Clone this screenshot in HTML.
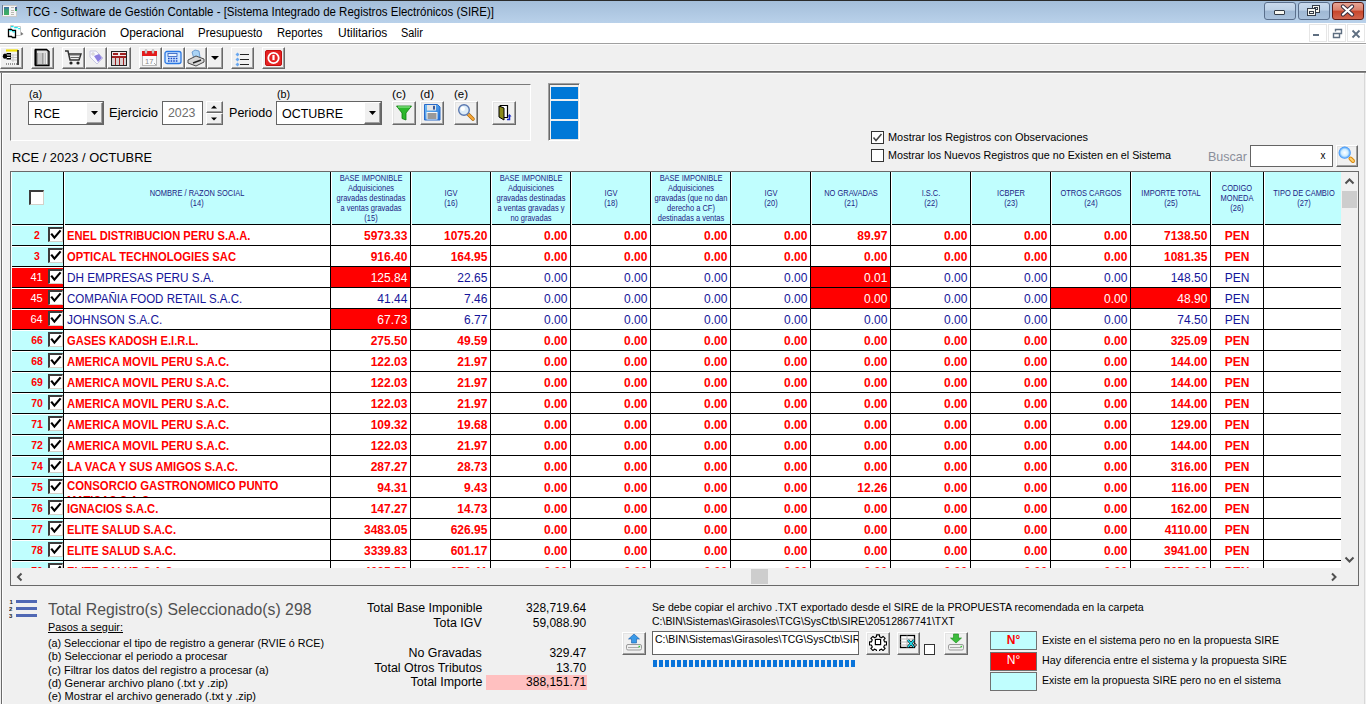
<!DOCTYPE html><html><head><meta charset="utf-8"><style>
html,body{margin:0;padding:0;}
body{width:1366px;height:704px;overflow:hidden;position:relative;background:#f0f0f0;font-family:"Liberation Sans",sans-serif;}
div{box-sizing:border-box;}
</style></head><body>
<div style="position:absolute;left:0px;top:0px;width:1366px;height:23px;background:linear-gradient(#a3bdd9,#b9d1ea);"></div>
<div style="position:absolute;left:0px;top:0px;width:1366px;height:1px;background:#2a2a2a;"></div>
<div style="position:absolute;left:2px;top:5px;width:15px;height:12px;background:#f4f4f4;border:1px solid #c8c8c8;"></div>
<div style="position:absolute;left:4px;top:7px;width:5px;height:8px;background:#4a9a88;"></div>
<div style="position:absolute;left:2px;top:5px;width:1px;height:10px;background:#6a7a90;"></div>
<div style="position:absolute;left:4px;top:7px;width:5px;height:8px;background:linear-gradient(#3a6aa8,#3aa070 40%,#40b060);"></div>
<div style="position:absolute;left:11px;top:7px;width:3px;height:1px;background:#b8b8b0;"></div>
<div style="position:absolute;left:11px;top:9.5px;width:3px;height:1px;background:#b8b8b0;"></div>
<div style="position:absolute;left:11px;top:12px;width:3px;height:1px;background:#b8b8b0;"></div>
<div style="position:absolute;left:11px;top:14px;width:3px;height:1px;background:#b8b8b0;"></div>
<div style="position:absolute;left:15px;top:7px;width:1.5px;height:4px;background:linear-gradient(#4040a0,#30b050);"></div>
<div id="t1" style="position:absolute;left:25.8px;top:5.72px;font:normal 12.5px 'Liberation Sans', sans-serif;line-height:12.5px;color:#000;white-space:pre;transform:scaleX(0.9178);transform-origin:left 50%;">TCG - Software de Gestión Contable - [Sistema Integrado de Registros Electrónicos (SIRE)]</div>
<div style="position:absolute;left:1264px;top:2px;width:32px;height:18px;border:1px solid #5a6f8c;border-radius:3px;background:linear-gradient(#c9daed 0%,#bcd0e6 45%,#9fb8d4 50%,#a9c1dc 100%);"></div>
<div style="position:absolute;left:1298px;top:2px;width:32px;height:18px;border:1px solid #5a6f8c;border-radius:3px;background:linear-gradient(#c9daed 0%,#bcd0e6 45%,#9fb8d4 50%,#a9c1dc 100%);"></div>
<div style="position:absolute;left:1332px;top:2px;width:32px;height:18px;border:1px solid #5d1a14;border-radius:3px;background:linear-gradient(#e8a595 0%,#d9806c 45%,#c7452a 50%,#d2664f 100%);"></div>
<div style="position:absolute;left:1274px;top:10px;width:11px;height:5px;background:#f6f6f0;border:1px solid #343c48;border-radius:1px;"></div>
<div style="position:absolute;left:1312px;top:5px;width:8px;height:8px;background:#f6f6f0;border:1px solid #343c48;"></div>
<div style="position:absolute;left:1314px;top:7px;width:4px;height:3px;border:1px solid #343c48;"></div>
<div style="position:absolute;left:1307px;top:8px;width:9px;height:8px;background:#f6f6f0;border:1px solid #343c48;"></div>
<div style="position:absolute;left:1309px;top:11px;width:5px;height:3px;border:1px solid #343c48;"></div>
<svg style="position:absolute;left:1340px;top:4px" width="15" height="13"><path d="M3 2.5 L12 10.5 M12 2.5 L3 10.5" stroke="#3a3040" stroke-width="4.2" stroke-linecap="round"/><path d="M3 2.5 L12 10.5 M12 2.5 L3 10.5" stroke="#fff" stroke-width="2.2" stroke-linecap="round"/></svg>
<div style="position:absolute;left:0px;top:23px;width:1366px;height:20px;background:#fff;"></div>
<div style="position:absolute;left:0px;top:43px;width:1366px;height:1px;background:#a0a0a0;"></div>
<div style="position:absolute;left:0px;top:44px;width:1366px;height:1px;background:#fcfcfc;"></div>
<svg style="position:absolute;left:4px;top:22px" width="22" height="20"><path d="M6.5 3.5 h3 l1 1 h6 v9 h-6 l-1 -1 h-3 z" fill="#fff" stroke="#c8c8c8" stroke-width="1"/><path d="M7 4.6 h2.6 M10.2 5.6 h3.6 M14.2 6.6 h2" stroke="#18e8f0" stroke-width="1.1"/><path d="M17 10 l2.5 2 l-2.5 1.5 z" fill="#777"/><path d="M4.5 7.5 h3 l1 1 h3 v7 h-3 l-1 -1 h-3 z" fill="#fff" stroke="#000" stroke-width="1.3"/><path d="M5.3 8.7 h2.4 M8.6 9.8 h2.4" stroke="#18e8f0" stroke-width="1.2"/></svg>
<div id="t2" style="position:absolute;left:30.5px;top:26.62px;font:normal 12.5px 'Liberation Sans', sans-serif;line-height:12.5px;color:#000;white-space:pre;transform:scaleX(0.9723);transform-origin:left 50%;">Configuración</div>
<div id="t3" style="position:absolute;left:120px;top:26.62px;font:normal 12.5px 'Liberation Sans', sans-serif;line-height:12.5px;color:#000;white-space:pre;transform:scaleX(0.9495);transform-origin:left 50%;">Operacional</div>
<div id="t4" style="position:absolute;left:198px;top:26.62px;font:normal 12.5px 'Liberation Sans', sans-serif;line-height:12.5px;color:#000;white-space:pre;transform:scaleX(0.9190);transform-origin:left 50%;">Presupuesto</div>
<div id="t5" style="position:absolute;left:277.4px;top:26.62px;font:normal 12.5px 'Liberation Sans', sans-serif;line-height:12.5px;color:#000;white-space:pre;transform:scaleX(0.8988);transform-origin:left 50%;">Reportes</div>
<div id="t6" style="position:absolute;left:337.5px;top:26.62px;font:normal 12.5px 'Liberation Sans', sans-serif;line-height:12.5px;color:#000;white-space:pre;transform:scaleX(0.9590);transform-origin:left 50%;">Utilitarios</div>
<div id="t7" style="position:absolute;left:401.3px;top:26.62px;font:normal 12.5px 'Liberation Sans', sans-serif;line-height:12.5px;color:#000;white-space:pre;transform:scaleX(0.8715);transform-origin:left 50%;">Salir</div>
<div style="position:absolute;left:1309px;top:24px;width:18px;height:18px;background:#fff;border:1px solid #e6e6e6;"></div>
<div style="position:absolute;left:1328px;top:24px;width:18px;height:18px;background:#fff;border:1px solid #e6e6e6;"></div>
<div style="position:absolute;left:1347px;top:24px;width:18px;height:18px;background:#fff;border:1px solid #e6e6e6;"></div>
<div style="position:absolute;left:1313px;top:34px;width:6px;height:2px;background:#5e6e80;"></div>
<svg style="position:absolute;left:1329px;top:25px" width="16" height="16"><path d="M4.5 8.5 h6 v4 h-6 z M6.5 6.5 v-2 h6 v4 h-2" fill="none" stroke="#5e6e80" stroke-width="1.4"/></svg>
<svg style="position:absolute;left:1348px;top:25px" width="16" height="16"><path d="M4.5 5.5 L11.5 12.5 M11.5 5.5 L4.5 12.5" stroke="#5e6e80" stroke-width="1.8"/></svg>
<div style="position:absolute;left:0px;top:47px;width:23px;height:22px;background:#f0f0f0;border-top:1px solid #fff;border-left:1px solid #fff;border-right:1px solid #696969;border-bottom:1px solid #696969;box-shadow:inset -1px -1px 0 #a0a0a0;"></div>
<div style="position:absolute;left:31px;top:47px;width:23px;height:22px;background:#f0f0f0;border-top:1px solid #fff;border-left:1px solid #fff;border-right:1px solid #696969;border-bottom:1px solid #696969;box-shadow:inset -1px -1px 0 #a0a0a0;"></div>
<div style="position:absolute;left:62px;top:47px;width:23px;height:22px;background:#f0f0f0;border-top:1px solid #fff;border-left:1px solid #fff;border-right:1px solid #696969;border-bottom:1px solid #696969;box-shadow:inset -1px -1px 0 #a0a0a0;"></div>
<div style="position:absolute;left:85px;top:47px;width:22px;height:22px;background:#f0f0f0;border-top:1px solid #fff;border-left:1px solid #fff;border-right:1px solid #696969;border-bottom:1px solid #696969;box-shadow:inset -1px -1px 0 #a0a0a0;"></div>
<div style="position:absolute;left:107px;top:47px;width:24px;height:22px;background:#f0f0f0;border-top:1px solid #fff;border-left:1px solid #fff;border-right:1px solid #696969;border-bottom:1px solid #696969;box-shadow:inset -1px -1px 0 #a0a0a0;"></div>
<div style="position:absolute;left:139px;top:47px;width:22.5px;height:22px;background:#f0f0f0;border-top:1px solid #fff;border-left:1px solid #fff;border-right:1px solid #696969;border-bottom:1px solid #696969;box-shadow:inset -1px -1px 0 #a0a0a0;"></div>
<div style="position:absolute;left:161.5px;top:47px;width:23.5px;height:22px;background:#f0f0f0;border-top:1px solid #fff;border-left:1px solid #fff;border-right:1px solid #696969;border-bottom:1px solid #696969;box-shadow:inset -1px -1px 0 #a0a0a0;"></div>
<div style="position:absolute;left:185px;top:47px;width:21.5px;height:22px;background:#f0f0f0;border-top:1px solid #fff;border-left:1px solid #fff;border-right:1px solid #696969;border-bottom:1px solid #696969;box-shadow:inset -1px -1px 0 #a0a0a0;"></div>
<div style="position:absolute;left:206.5px;top:47px;width:16.5px;height:22px;background:#f0f0f0;border-top:1px solid #fff;border-left:1px solid #fff;border-right:1px solid #696969;border-bottom:1px solid #696969;box-shadow:inset -1px -1px 0 #a0a0a0;"></div>
<div style="position:absolute;left:231px;top:47px;width:23px;height:22px;background:#f0f0f0;border-top:1px solid #fff;border-left:1px solid #fff;border-right:1px solid #696969;border-bottom:1px solid #696969;box-shadow:inset -1px -1px 0 #a0a0a0;"></div>
<div style="position:absolute;left:262px;top:47px;width:23px;height:22px;background:#f0f0f0;border-top:1px solid #fff;border-left:1px solid #fff;border-right:1px solid #696969;border-bottom:1px solid #696969;box-shadow:inset -1px -1px 0 #a0a0a0;"></div>
<svg style="position:absolute;left:0px;top:47px" width="23" height="21"><rect x="6" y="3" width="12" height="15" fill="#f4f4f4"/><path d="M6 3.5 h12" stroke="#f0e000" stroke-width="2.2"/><path d="M18 3 v15" stroke="#000" stroke-width="1.4"/><path d="M11 8 h6 M11 10.5 h6 M11 13 h6 M13 7 v8" stroke="#c8c8c8" stroke-width="1"/><path d="M6 17 h12" stroke="#777" stroke-width="1.4" stroke-dasharray="1 1"/><rect x="6.5" y="6" width="4.5" height="6.5" fill="#000"/><ellipse cx="5" cy="9.2" rx="2.2" ry="2.6" fill="#000"/><path d="M7 8 h3.5 M7 10.5 h3.5" stroke="#fff" stroke-width="1"/></svg>
<svg style="position:absolute;left:31px;top:47px" width="23" height="21"><path d="M4.5 2.5 h11 l2.5 2 v14 h-13.5 z" fill="#9a9a9a" stroke="#000" stroke-width="1.3"/><path d="M6 5 h10" stroke="#fff" stroke-width="1.4"/><rect x="7" y="6" width="4" height="11" fill="#c8c8c8"/><rect x="12.5" y="6" width="2" height="11" fill="#d8d8d8"/><path d="M15.5 6 v11" stroke="#f4f4f4" stroke-width="1"/><path d="M4.5 2.5 v16" stroke="#000" stroke-width="2"/></svg>
<svg style="position:absolute;left:64px;top:49px" width="18" height="18"><path d="M1 2 h3 l2 9 h9 l2 -6 h-12" fill="none" stroke="#333" stroke-width="1.5"/><path d="M6 6 h10 M6.5 8.5 h9" stroke="#666" stroke-width="1"/><circle cx="7" cy="14" r="1.6" fill="#222"/><circle cx="14" cy="14" r="1.6" fill="#222"/></svg>
<svg style="position:absolute;left:87px;top:49px" width="18" height="18"><path d="M3 2 L9 2 L16 9 L10 15 L3 8 Z" fill="#f8f8ff" stroke="#c8c8e0" stroke-width="1"/><path d="M7 7 L12 5 L15 9 L11 13 Z" fill="#8c7fe0"/><circle cx="6" cy="5" r="1.2" fill="#fff" stroke="#aaa" stroke-width=".6"/></svg>
<div style="position:absolute;left:111px;top:51px;width:16px;height:15px;background:#f0e8e8;border:1.5px solid #222;"></div>
<div style="position:absolute;left:113px;top:53px;width:5px;height:1.5px;background:#a02020;"></div>
<div style="position:absolute;left:120px;top:53px;width:6px;height:1.5px;background:#a02020;"></div>
<div style="position:absolute;left:112px;top:56px;width:14px;height:1.5px;background:#a02020;"></div>
<div style="position:absolute;left:112px;top:58px;width:14px;height:7px;background:repeating-linear-gradient(90deg,#d8d0d0 0 3px,#a02020 3px 4px);"></div>
<svg style="position:absolute;left:141px;top:49px" width="18" height="18"><rect x="1.5" y="2.5" width="14" height="14" fill="#fbfbfb" stroke="#b8b8b8" stroke-width="1"/><rect x="1" y="2" width="15" height="5" fill="#e41c1c"/><rect x="4" y="0.5" width="2" height="4" rx="1" fill="#d8d8d8" stroke="#999" stroke-width=".5"/><rect x="11" y="0.5" width="2" height="4" rx="1" fill="#d8d8d8" stroke="#999" stroke-width=".5"/><text x="4" y="14.5" font-family="Liberation Sans" font-size="7.5" fill="#8a8a8a">17</text><path d="M13 14 l2 2" stroke="#aaa" stroke-width="1"/></svg>
<svg style="position:absolute;left:164px;top:50px" width="18" height="16"><rect x="1" y="1.5" width="16" height="12" rx="2" fill="#cfe6ff" stroke="#2a78e4" stroke-width="1.3"/><rect x="4" y="3.5" width="9" height="3" fill="#eaf4ff" stroke="#2a5ac0" stroke-width=".8"/><path d="M4 8.5 h10 M4 11 h10" stroke="#1a4ac8" stroke-width="1.3" stroke-dasharray="1.6 1"/></svg>
<svg style="position:absolute;left:187px;top:49px" width="18" height="18"><path d="M5 3 l3 -2 l4 1 l1 6 l-6 2 z" fill="#aad4f6" stroke="#5a8ec8" stroke-width=".8"/><path d="M1 11 l8 -4 l8 3 v3 l-8 4 l-8 -3 z" fill="#d6d6d6" stroke="#4a4a4a" stroke-width="1"/><path d="M6 14 l8 -3" stroke="#222" stroke-width="1.4"/></svg>
<svg style="position:absolute;left:210px;top:54px" width="10" height="8"><path d="M1 2 h8 l-4 4 z" fill="#000"/></svg>
<svg style="position:absolute;left:235px;top:52px" width="5" height="5"><path d="M2.5 0.5 l2 2 l-2 2 l-2 -2 z" fill="#6aa8f0"/></svg>
<div style="position:absolute;left:240px;top:53.5px;width:8.5px;height:1.5px;background:#222;"></div>
<svg style="position:absolute;left:235px;top:57px" width="5" height="5"><path d="M2.5 0.5 l2 2 l-2 2 l-2 -2 z" fill="#6aa8f0"/></svg>
<div style="position:absolute;left:240px;top:58.5px;width:8.5px;height:1.5px;background:#222;"></div>
<svg style="position:absolute;left:235px;top:62px" width="5" height="5"><path d="M2.5 0.5 l2 2 l-2 2 l-2 -2 z" fill="#6aa8f0"/></svg>
<div style="position:absolute;left:240px;top:63.5px;width:8.5px;height:1.5px;background:#222;"></div>
<svg style="position:absolute;left:265px;top:50px" width="17" height="16"><rect x="0.5" y="0.5" width="16" height="15" rx="1.5" fill="#e62222" stroke="#c01010" stroke-width="1"/><circle cx="8.5" cy="8" r="5.2" fill="none" stroke="#fff" stroke-width="1.8"/><rect x="7" y="4.5" width="3" height="6" fill="#fff" stroke="#e62222" stroke-width=".8"/></svg>
<div style="position:absolute;left:0px;top:70px;width:1366px;height:1px;background:#f8f8f8;"></div>
<div style="position:absolute;left:0px;top:71px;width:1366px;height:2px;background:linear-gradient(#6a6a6a 50%,#8a8a8a 50%);"></div>
<div style="position:absolute;left:1px;top:73px;width:1px;height:631px;background:#6a6a6a;"></div>
<div style="position:absolute;left:2px;top:73px;width:1362px;height:1px;background:#fdfdfd;"></div>
<div style="position:absolute;left:2px;top:73px;width:1px;height:631px;background:#fdfdfd;"></div>
<div style="position:absolute;left:1364px;top:73px;width:1px;height:631px;background:#d8d8d8;"></div>
<div style="position:absolute;left:10px;top:84px;width:521px;height:57px;border-top:1px solid #7a7a7a;border-left:1px solid #7a7a7a;border-right:1px solid #fff;border-bottom:1px solid #fff;"></div>
<div style="position:absolute;left:11px;top:85px;width:519px;height:55px;border-top:1px solid #fff;border-left:1px solid #fff;border-right:1px solid #a0a0a0;border-bottom:1px solid #a0a0a0;opacity:0;"></div>
<div id="t8" style="position:absolute;left:28.8px;top:88.69px;font:normal 11px 'Liberation Sans', sans-serif;line-height:11px;color:#000;white-space:pre;transform:scaleX(0.9812);transform-origin:left 50%;">(a)</div>
<div id="t9" style="position:absolute;left:276.5px;top:88.69px;font:normal 11px 'Liberation Sans', sans-serif;line-height:11px;color:#000;white-space:pre;transform:scaleX(0.9738);transform-origin:left 50%;">(b)</div>
<div id="t10" style="position:absolute;left:392px;top:88.69px;font:normal 11px 'Liberation Sans', sans-serif;line-height:11px;color:#000;white-space:pre;transform:scaleX(1.0914);transform-origin:left 50%;">(c)</div>
<div id="t11" style="position:absolute;left:420px;top:88.69px;font:normal 11px 'Liberation Sans', sans-serif;line-height:11px;color:#000;white-space:pre;transform:scaleX(1.0407);transform-origin:left 50%;">(d)</div>
<div id="t12" style="position:absolute;left:454px;top:88.69px;font:normal 11px 'Liberation Sans', sans-serif;line-height:11px;color:#000;white-space:pre;transform:scaleX(1.0407);transform-origin:left 50%;">(e)</div>
<div style="position:absolute;left:28px;top:101px;width:76px;height:24px;background:#fff;border:1px solid #646464;"></div>
<div style="position:absolute;left:86px;top:102px;width:17px;height:22px;background:#f0f0f0;border-top:1px solid #fff;border-left:1px solid #fff;border-right:1px solid #696969;border-bottom:1px solid #696969;box-shadow:inset -1px -1px 0 #a0a0a0;"></div>
<svg style="position:absolute;left:91.0px;top:111px" width="7" height="4"><path d="M0 0 h7 l-3.5 4 z" fill="#000"/></svg>
<div id="t13" style="position:absolute;left:34.2px;top:106.80px;font:normal 13px 'Liberation Sans', sans-serif;line-height:13px;color:#000;white-space:pre;transform:scaleX(0.9471);transform-origin:left 50%;">RCE</div>
<div id="t14" style="position:absolute;left:109.4px;top:106.00px;font:normal 13px 'Liberation Sans', sans-serif;line-height:13px;color:#000;white-space:pre;transform:scaleX(0.9975);transform-origin:left 50%;">Ejercicio</div>
<div style="position:absolute;left:162px;top:101px;width:41px;height:24px;background:#fff;border:1px solid #646464;"></div>
<div id="t15" style="position:absolute;left:168px;top:106.00px;font:normal 13px 'Liberation Sans', sans-serif;line-height:13px;color:#6d6d6d;white-space:pre;transform:scaleX(0.9508);transform-origin:left 50%;">2023</div>
<div style="position:absolute;left:206px;top:101px;width:17px;height:12px;background:#f0f0f0;border-top:1px solid #fff;border-left:1px solid #fff;border-right:1px solid #696969;border-bottom:1px solid #696969;box-shadow:inset -1px -1px 0 #a0a0a0;"></div>
<div style="position:absolute;left:206px;top:113px;width:17px;height:12px;background:#f0f0f0;border-top:1px solid #fff;border-left:1px solid #fff;border-right:1px solid #696969;border-bottom:1px solid #696969;box-shadow:inset -1px -1px 0 #a0a0a0;"></div>
<svg style="position:absolute;left:211px;top:105px" width="6" height="4"><path d="M0 3.5 h6 l-3 -3 z" fill="#000"/></svg>
<svg style="position:absolute;left:211px;top:117px" width="6" height="4"><path d="M0 0.5 h6 l-3 3 z" fill="#000"/></svg>
<div id="t16" style="position:absolute;left:229.1px;top:105.80px;font:normal 13px 'Liberation Sans', sans-serif;line-height:13px;color:#000;white-space:pre;transform:scaleX(0.9662);transform-origin:left 50%;">Periodo</div>
<div style="position:absolute;left:276px;top:101px;width:106px;height:24px;background:#fff;border:1px solid #646464;"></div>
<div style="position:absolute;left:364px;top:102px;width:17px;height:22px;background:#f0f0f0;border-top:1px solid #fff;border-left:1px solid #fff;border-right:1px solid #696969;border-bottom:1px solid #696969;box-shadow:inset -1px -1px 0 #a0a0a0;"></div>
<svg style="position:absolute;left:369.0px;top:111px" width="7" height="4"><path d="M0 0 h7 l-3.5 4 z" fill="#000"/></svg>
<div id="t17" style="position:absolute;left:282.4px;top:107.00px;font:normal 13px 'Liberation Sans', sans-serif;line-height:13px;color:#000;white-space:pre;transform:scaleX(0.9597);transform-origin:left 50%;">OCTUBRE</div>
<div style="position:absolute;left:392px;top:101px;width:24px;height:24px;background:#f0f0f0;border-top:1px solid #fff;border-left:1px solid #fff;border-right:1px solid #696969;border-bottom:1px solid #696969;box-shadow:inset -1px -1px 0 #a0a0a0, inset 1px 1px 0 #e3e3e3;"></div>
<div style="position:absolute;left:420px;top:101px;width:24px;height:24px;background:#f0f0f0;border-top:1px solid #fff;border-left:1px solid #fff;border-right:1px solid #696969;border-bottom:1px solid #696969;box-shadow:inset -1px -1px 0 #a0a0a0, inset 1px 1px 0 #e3e3e3;"></div>
<div style="position:absolute;left:454px;top:101px;width:24px;height:24px;background:#f0f0f0;border-top:1px solid #fff;border-left:1px solid #fff;border-right:1px solid #696969;border-bottom:1px solid #696969;box-shadow:inset -1px -1px 0 #a0a0a0, inset 1px 1px 0 #e3e3e3;"></div>
<div style="position:absolute;left:492px;top:101px;width:24px;height:24px;background:#f0f0f0;border-top:1px solid #fff;border-left:1px solid #fff;border-right:1px solid #696969;border-bottom:1px solid #696969;box-shadow:inset -1px -1px 0 #a0a0a0, inset 1px 1px 0 #e3e3e3;"></div>
<svg style="position:absolute;left:395px;top:104px" width="18" height="18"><path d="M1.5 2 h15 l-5.5 7 v7 l-4 -1.5 v-5.5 z" fill="#2cb82c" stroke="#0e7a0e" stroke-width=".8"/><path d="M3 3 h12" stroke="#8de88d" stroke-width="1.2"/></svg>
<svg style="position:absolute;left:424px;top:104px" width="17" height="17"><defs><linearGradient id="sv" x1="0" y1="0" x2="1" y2="1"><stop offset="0" stop-color="#7ac4f8"/><stop offset="1" stop-color="#1c6cd4"/></linearGradient></defs><path d="M0.5 0.5 h13 l2.5 2.5 v13 h-15.5 z" fill="url(#sv)" stroke="#2a6ac8" stroke-width="1"/><rect x="3" y="1" width="9" height="5.5" fill="#e6e6e6"/><rect x="9" y="1.8" width="2" height="3.8" fill="#3a5a9a"/><rect x="2.5" y="8" width="11" height="7.5" fill="#f8f8f8"/><path d="M3.5 10 h9 M3.5 12 h9 M3.5 14 h9" stroke="#3a3a3a" stroke-width="1"/></svg>
<svg style="position:absolute;left:457px;top:103px" width="19" height="19"><path d="M10.5 10.5 L16 16" stroke="#a86a10" stroke-width="3.6" stroke-linecap="round"/><path d="M10.5 10.5 L16 16" stroke="#f8a838" stroke-width="2.2" stroke-linecap="round"/><circle cx="7" cy="7" r="5.3" fill="#dcecf8" stroke="#5a78b0" stroke-width="1.4"/><circle cx="5.8" cy="5.8" r="2.2" fill="#fff"/></svg>
<svg style="position:absolute;left:495px;top:103px" width="19" height="19"><path d="M5.5 2.5 h7 v12 h-7 z" fill="#fff" stroke="#000" stroke-width="1.2"/><path d="M4 3 l5 2 v12 l-5 -3 z" fill="#8a8a1a" stroke="#000" stroke-width="1"/><path d="M12 16.5 h2.5 v-3.5" fill="none" stroke="#1a2ac8" stroke-width="1.5"/><path d="M12.5 13.5 l2 -2.5 l2 2.5 z" fill="#1a2ac8"/></svg>
<div style="position:absolute;left:548px;top:83px;width:32px;height:58px;background:#f0f0f0;border-top:1px solid #a0a0a0;border-left:1px solid #a0a0a0;border-right:1px solid #fff;border-bottom:1px solid #fff;box-shadow:inset 1px 1px 0 #696969, inset -1px -1px 0 #e3e3e3;"></div>
<div style="position:absolute;left:551px;top:87px;width:27px;height:12px;background:#0078d7;"></div>
<div style="position:absolute;left:551px;top:101px;width:27px;height:18px;background:#0078d7;"></div>
<div style="position:absolute;left:551px;top:121px;width:27px;height:18px;background:#0078d7;"></div>
<div style="position:absolute;left:871px;top:131px;width:13px;height:13px;background:#fff;border:1px solid #333;"></div>
<svg style="position:absolute;left:871px;top:131px" width="13" height="13"><path d="M2.5 6.5 L5 9.5 L10.5 3" fill="none" stroke="#444" stroke-width="1.5"/></svg>
<div style="position:absolute;left:871px;top:149px;width:13px;height:13px;background:#fff;border:1px solid #333;"></div>
<div id="t18" style="position:absolute;left:887.6px;top:132.29px;font:normal 11px 'Liberation Sans', sans-serif;line-height:11px;color:#000;white-space:pre;transform:scaleX(0.9943);transform-origin:left 50%;">Mostrar los Registros con Observaciones</div>
<div id="t19" style="position:absolute;left:887.6px;top:150.09px;font:normal 11px 'Liberation Sans', sans-serif;line-height:11px;color:#000;white-space:pre;transform:scaleX(0.9765);transform-origin:left 50%;">Mostrar los Nuevos Registros que no Existen en el Sistema</div>
<div id="t20" style="position:absolute;left:1208.2px;top:150.00px;font:normal 13px 'Liberation Sans', sans-serif;line-height:13px;color:#8a8e9a;white-space:pre;transform:scaleX(0.9637);transform-origin:left 50%;">Buscar</div>
<div style="position:absolute;left:1250px;top:145px;width:83px;height:22px;background:#fff;border:1px solid #646464;"></div>
<div id="t21" style="position:absolute;left:1320.5px;top:151.03px;font:normal 10px 'Liberation Sans', sans-serif;line-height:10px;color:#000;white-space:pre;">x</div>
<div style="position:absolute;left:1336px;top:145px;width:22px;height:22px;background:#f0f0f0;border-top:1px solid #fff;border-left:1px solid #fff;border-right:1px solid #696969;border-bottom:1px solid #696969;box-shadow:inset -1px -1px 0 #a0a0a0, inset 1px 1px 0 #e3e3e3;"></div>
<svg style="position:absolute;left:1336px;top:144px" width="22" height="22"><defs><radialGradient id="lg" cx="0.5" cy="0.5" r="0.5"><stop offset="0" stop-color="#ffffff"/><stop offset="0.55" stop-color="#cfeeff"/><stop offset="1" stop-color="#2a8af8"/></radialGradient></defs><path d="M14.5 14.5 L17 17" stroke="#d88a10" stroke-width="4" stroke-linecap="round"/><path d="M14.5 14.5 L17 17" stroke="#ffd070" stroke-width="2" stroke-linecap="round"/><circle cx="8.7" cy="8.7" r="6.1" fill="url(#lg)"/></svg>
<div id="t22" style="position:absolute;left:12.3px;top:151.00px;font:normal 13px 'Liberation Sans', sans-serif;line-height:13px;color:#000;white-space:pre;transform:scaleX(0.9886);transform-origin:left 50%;">RCE / 2023 / OCTUBRE</div>
<div style="position:absolute;left:10px;top:171px;width:1349px;height:415px;border:1px solid #696969;background:#f0f0f0;"></div>
<div style="position:absolute;left:11px;top:172px;width:1330px;height:396px;background:#fff;"></div>
<div style="position:absolute;left:12px;top:172px;width:1329px;height:52px;background:#c0fefe;"></div>
<div style="position:absolute;left:29px;top:190px;width:15px;height:15px;background:#fff;border-top:2px solid #3c3c3c;border-left:2px solid #3c3c3c;border-right:1px solid #d4d0c8;border-bottom:1px solid #d4d0c8;"></div>
<div id="t23" style="position:absolute;left:197.0px;top:188.72px;font:normal 8.6px 'Liberation Sans', sans-serif;line-height:8.6px;color:#1c1c84;white-space:pre;transform:translateX(-50%) scaleX(0.8700);transform-origin:center 50%;">NOMBRE / RAZON SOCIAL</div>
<div id="t24" style="position:absolute;left:197.0px;top:198.72px;font:normal 8.6px 'Liberation Sans', sans-serif;line-height:8.6px;color:#1c1c84;white-space:pre;transform:translateX(-50%) scaleX(0.8700);transform-origin:center 50%;">(14)</div>
<div id="t25" style="position:absolute;left:370.5px;top:173.72px;font:normal 8.6px 'Liberation Sans', sans-serif;line-height:8.6px;color:#1c1c84;white-space:pre;transform:translateX(-50%) scaleX(0.8700);transform-origin:center 50%;">BASE IMPONIBLE</div>
<div id="t26" style="position:absolute;left:370.5px;top:183.72px;font:normal 8.6px 'Liberation Sans', sans-serif;line-height:8.6px;color:#1c1c84;white-space:pre;transform:translateX(-50%) scaleX(0.8700);transform-origin:center 50%;">Adquisiciones</div>
<div id="t27" style="position:absolute;left:370.5px;top:193.72px;font:normal 8.6px 'Liberation Sans', sans-serif;line-height:8.6px;color:#1c1c84;white-space:pre;transform:translateX(-50%) scaleX(0.8700);transform-origin:center 50%;">gravadas destinadas</div>
<div id="t28" style="position:absolute;left:370.5px;top:203.72px;font:normal 8.6px 'Liberation Sans', sans-serif;line-height:8.6px;color:#1c1c84;white-space:pre;transform:translateX(-50%) scaleX(0.8700);transform-origin:center 50%;">a ventas gravadas</div>
<div id="t29" style="position:absolute;left:370.5px;top:213.72px;font:normal 8.6px 'Liberation Sans', sans-serif;line-height:8.6px;color:#1c1c84;white-space:pre;transform:translateX(-50%) scaleX(0.8700);transform-origin:center 50%;">(15)</div>
<div id="t30" style="position:absolute;left:450.5px;top:188.72px;font:normal 8.6px 'Liberation Sans', sans-serif;line-height:8.6px;color:#1c1c84;white-space:pre;transform:translateX(-50%) scaleX(0.8700);transform-origin:center 50%;">IGV</div>
<div id="t31" style="position:absolute;left:450.5px;top:198.72px;font:normal 8.6px 'Liberation Sans', sans-serif;line-height:8.6px;color:#1c1c84;white-space:pre;transform:translateX(-50%) scaleX(0.8700);transform-origin:center 50%;">(16)</div>
<div id="t32" style="position:absolute;left:530.5px;top:173.72px;font:normal 8.6px 'Liberation Sans', sans-serif;line-height:8.6px;color:#1c1c84;white-space:pre;transform:translateX(-50%) scaleX(0.8700);transform-origin:center 50%;">BASE IMPONIBLE</div>
<div id="t33" style="position:absolute;left:530.5px;top:183.72px;font:normal 8.6px 'Liberation Sans', sans-serif;line-height:8.6px;color:#1c1c84;white-space:pre;transform:translateX(-50%) scaleX(0.8700);transform-origin:center 50%;">Adquisiciones</div>
<div id="t34" style="position:absolute;left:530.5px;top:193.72px;font:normal 8.6px 'Liberation Sans', sans-serif;line-height:8.6px;color:#1c1c84;white-space:pre;transform:translateX(-50%) scaleX(0.8700);transform-origin:center 50%;">gravadas destinadas</div>
<div id="t35" style="position:absolute;left:530.5px;top:203.72px;font:normal 8.6px 'Liberation Sans', sans-serif;line-height:8.6px;color:#1c1c84;white-space:pre;transform:translateX(-50%) scaleX(0.8700);transform-origin:center 50%;">a ventas gravadas y</div>
<div id="t36" style="position:absolute;left:530.5px;top:213.72px;font:normal 8.6px 'Liberation Sans', sans-serif;line-height:8.6px;color:#1c1c84;white-space:pre;transform:translateX(-50%) scaleX(0.8700);transform-origin:center 50%;">no gravadas</div>
<div id="t37" style="position:absolute;left:610.5px;top:188.72px;font:normal 8.6px 'Liberation Sans', sans-serif;line-height:8.6px;color:#1c1c84;white-space:pre;transform:translateX(-50%) scaleX(0.8700);transform-origin:center 50%;">IGV</div>
<div id="t38" style="position:absolute;left:610.5px;top:198.72px;font:normal 8.6px 'Liberation Sans', sans-serif;line-height:8.6px;color:#1c1c84;white-space:pre;transform:translateX(-50%) scaleX(0.8700);transform-origin:center 50%;">(18)</div>
<div id="t39" style="position:absolute;left:690.5px;top:173.72px;font:normal 8.6px 'Liberation Sans', sans-serif;line-height:8.6px;color:#1c1c84;white-space:pre;transform:translateX(-50%) scaleX(0.8700);transform-origin:center 50%;">BASE IMPONIBLE</div>
<div id="t40" style="position:absolute;left:690.5px;top:183.72px;font:normal 8.6px 'Liberation Sans', sans-serif;line-height:8.6px;color:#1c1c84;white-space:pre;transform:translateX(-50%) scaleX(0.8700);transform-origin:center 50%;">Adquisiciones</div>
<div id="t41" style="position:absolute;left:690.5px;top:193.72px;font:normal 8.6px 'Liberation Sans', sans-serif;line-height:8.6px;color:#1c1c84;white-space:pre;transform:translateX(-50%) scaleX(0.8700);transform-origin:center 50%;">gravadas (que no dan</div>
<div id="t42" style="position:absolute;left:690.5px;top:203.72px;font:normal 8.6px 'Liberation Sans', sans-serif;line-height:8.6px;color:#1c1c84;white-space:pre;transform:translateX(-50%) scaleX(0.8700);transform-origin:center 50%;">derecho a CF)</div>
<div id="t43" style="position:absolute;left:690.5px;top:213.72px;font:normal 8.6px 'Liberation Sans', sans-serif;line-height:8.6px;color:#1c1c84;white-space:pre;transform:translateX(-50%) scaleX(0.8700);transform-origin:center 50%;">destinadas a ventas</div>
<div id="t44" style="position:absolute;left:770.5px;top:188.72px;font:normal 8.6px 'Liberation Sans', sans-serif;line-height:8.6px;color:#1c1c84;white-space:pre;transform:translateX(-50%) scaleX(0.8700);transform-origin:center 50%;">IGV</div>
<div id="t45" style="position:absolute;left:770.5px;top:198.72px;font:normal 8.6px 'Liberation Sans', sans-serif;line-height:8.6px;color:#1c1c84;white-space:pre;transform:translateX(-50%) scaleX(0.8700);transform-origin:center 50%;">(20)</div>
<div id="t46" style="position:absolute;left:850.5px;top:188.72px;font:normal 8.6px 'Liberation Sans', sans-serif;line-height:8.6px;color:#1c1c84;white-space:pre;transform:translateX(-50%) scaleX(0.8700);transform-origin:center 50%;">NO GRAVADAS</div>
<div id="t47" style="position:absolute;left:850.5px;top:198.72px;font:normal 8.6px 'Liberation Sans', sans-serif;line-height:8.6px;color:#1c1c84;white-space:pre;transform:translateX(-50%) scaleX(0.8700);transform-origin:center 50%;">(21)</div>
<div id="t48" style="position:absolute;left:930.5px;top:188.72px;font:normal 8.6px 'Liberation Sans', sans-serif;line-height:8.6px;color:#1c1c84;white-space:pre;transform:translateX(-50%) scaleX(0.8700);transform-origin:center 50%;">I.S.C.</div>
<div id="t49" style="position:absolute;left:930.5px;top:198.72px;font:normal 8.6px 'Liberation Sans', sans-serif;line-height:8.6px;color:#1c1c84;white-space:pre;transform:translateX(-50%) scaleX(0.8700);transform-origin:center 50%;">(22)</div>
<div id="t50" style="position:absolute;left:1010.5px;top:188.72px;font:normal 8.6px 'Liberation Sans', sans-serif;line-height:8.6px;color:#1c1c84;white-space:pre;transform:translateX(-50%) scaleX(0.8700);transform-origin:center 50%;">ICBPER</div>
<div id="t51" style="position:absolute;left:1010.5px;top:198.72px;font:normal 8.6px 'Liberation Sans', sans-serif;line-height:8.6px;color:#1c1c84;white-space:pre;transform:translateX(-50%) scaleX(0.8700);transform-origin:center 50%;">(23)</div>
<div id="t52" style="position:absolute;left:1090.5px;top:188.72px;font:normal 8.6px 'Liberation Sans', sans-serif;line-height:8.6px;color:#1c1c84;white-space:pre;transform:translateX(-50%) scaleX(0.8700);transform-origin:center 50%;">OTROS CARGOS</div>
<div id="t53" style="position:absolute;left:1090.5px;top:198.72px;font:normal 8.6px 'Liberation Sans', sans-serif;line-height:8.6px;color:#1c1c84;white-space:pre;transform:translateX(-50%) scaleX(0.8700);transform-origin:center 50%;">(24)</div>
<div id="t54" style="position:absolute;left:1170.5px;top:188.72px;font:normal 8.6px 'Liberation Sans', sans-serif;line-height:8.6px;color:#1c1c84;white-space:pre;transform:translateX(-50%) scaleX(0.8700);transform-origin:center 50%;">IMPORTE TOTAL</div>
<div id="t55" style="position:absolute;left:1170.5px;top:198.72px;font:normal 8.6px 'Liberation Sans', sans-serif;line-height:8.6px;color:#1c1c84;white-space:pre;transform:translateX(-50%) scaleX(0.8700);transform-origin:center 50%;">(25)</div>
<div id="t56" style="position:absolute;left:1237.0px;top:183.72px;font:normal 8.6px 'Liberation Sans', sans-serif;line-height:8.6px;color:#1c1c84;white-space:pre;transform:translateX(-50%) scaleX(0.8700);transform-origin:center 50%;">CODIGO</div>
<div id="t57" style="position:absolute;left:1237.0px;top:193.72px;font:normal 8.6px 'Liberation Sans', sans-serif;line-height:8.6px;color:#1c1c84;white-space:pre;transform:translateX(-50%) scaleX(0.8700);transform-origin:center 50%;">MONEDA</div>
<div id="t58" style="position:absolute;left:1237.0px;top:203.72px;font:normal 8.6px 'Liberation Sans', sans-serif;line-height:8.6px;color:#1c1c84;white-space:pre;transform:translateX(-50%) scaleX(0.8700);transform-origin:center 50%;">(26)</div>
<div id="t59" style="position:absolute;left:1303.5px;top:188.72px;font:normal 8.6px 'Liberation Sans', sans-serif;line-height:8.6px;color:#1c1c84;white-space:pre;transform:translateX(-50%) scaleX(0.8700);transform-origin:center 50%;">TIPO DE CAMBIO</div>
<div id="t60" style="position:absolute;left:1303.5px;top:198.72px;font:normal 8.6px 'Liberation Sans', sans-serif;line-height:8.6px;color:#1c1c84;white-space:pre;transform:translateX(-50%) scaleX(0.8700);transform-origin:center 50%;">(27)</div>
<div style="position:absolute;left:12px;top:224px;width:1329px;height:344px;overflow:hidden;">
<div style="position:absolute;left:0px;top:1px;width:51px;height:20px;background:#c0fefe;border-top:1px solid #fff;"></div>
<div style="position:absolute;left:36px;top:3px;width:15px;height:15px;background:#fff;border-top:2px solid #3c3c3c;border-left:2px solid #3c3c3c;border-right:1px solid #d4d0c8;border-bottom:1px solid #d4d0c8;"></div>
<svg style="position:absolute;left:36px;top:3px" width="15" height="15"><path d="M3.2 6.6 L6.4 10.6 L12.6 3.4" fill="none" stroke="#000" stroke-width="2.2"/></svg>
<div id="t61" style="position:absolute;left:24.6px;top:5.69px;font:bold 11px 'Liberation Sans', sans-serif;line-height:11px;color:#ff0000;white-space:pre;transform:translateX(-50%) scaleX(0.9500);transform-origin:center 50%;">2</div>
<div style="position:absolute;left:52px;top:1px;width:266px;height:20px;overflow:hidden;">
<div id="t62" style="position:absolute;left:3.200000000000003px;top:4.84px;font:bold 12px 'Liberation Sans', sans-serif;line-height:12px;color:#ff0000;white-space:pre;transform:scaleX(0.9298);transform-origin:left 50%;">ENEL DISTRIBUCION PERU S.A.A.</div>
</div>
<div id="t63" style="position:absolute;left:395.4px;top:5.84px;font:bold 12px 'Liberation Sans', sans-serif;line-height:12px;color:#ff0000;white-space:pre;transform:translateX(-100%);transform-origin:right 50%;">5973.33</div>
<div id="t64" style="position:absolute;left:475.4px;top:5.84px;font:bold 12px 'Liberation Sans', sans-serif;line-height:12px;color:#ff0000;white-space:pre;transform:translateX(-100%);transform-origin:right 50%;">1075.20</div>
<div id="t65" style="position:absolute;left:555.4px;top:5.84px;font:bold 12px 'Liberation Sans', sans-serif;line-height:12px;color:#ff0000;white-space:pre;transform:translateX(-100%);transform-origin:right 50%;">0.00</div>
<div id="t66" style="position:absolute;left:635.4px;top:5.84px;font:bold 12px 'Liberation Sans', sans-serif;line-height:12px;color:#ff0000;white-space:pre;transform:translateX(-100%);transform-origin:right 50%;">0.00</div>
<div id="t67" style="position:absolute;left:715.4px;top:5.84px;font:bold 12px 'Liberation Sans', sans-serif;line-height:12px;color:#ff0000;white-space:pre;transform:translateX(-100%);transform-origin:right 50%;">0.00</div>
<div id="t68" style="position:absolute;left:795.4px;top:5.84px;font:bold 12px 'Liberation Sans', sans-serif;line-height:12px;color:#ff0000;white-space:pre;transform:translateX(-100%);transform-origin:right 50%;">0.00</div>
<div id="t69" style="position:absolute;left:875.4px;top:5.84px;font:bold 12px 'Liberation Sans', sans-serif;line-height:12px;color:#ff0000;white-space:pre;transform:translateX(-100%);transform-origin:right 50%;">89.97</div>
<div id="t70" style="position:absolute;left:955.4px;top:5.84px;font:bold 12px 'Liberation Sans', sans-serif;line-height:12px;color:#ff0000;white-space:pre;transform:translateX(-100%);transform-origin:right 50%;">0.00</div>
<div id="t71" style="position:absolute;left:1035.4px;top:5.84px;font:bold 12px 'Liberation Sans', sans-serif;line-height:12px;color:#ff0000;white-space:pre;transform:translateX(-100%);transform-origin:right 50%;">0.00</div>
<div id="t72" style="position:absolute;left:1115.4px;top:5.84px;font:bold 12px 'Liberation Sans', sans-serif;line-height:12px;color:#ff0000;white-space:pre;transform:translateX(-100%);transform-origin:right 50%;">0.00</div>
<div id="t73" style="position:absolute;left:1195.4px;top:5.84px;font:bold 12px 'Liberation Sans', sans-serif;line-height:12px;color:#ff0000;white-space:pre;transform:translateX(-100%);transform-origin:right 50%;">7138.50</div>
<div id="t74" style="position:absolute;left:1225px;top:5.84px;font:bold 12px 'Liberation Sans', sans-serif;line-height:12px;color:#ff0000;white-space:pre;transform:translateX(-50%);transform-origin:center 50%;">PEN</div>
<div style="position:absolute;left:0px;top:21px;width:1329px;height:1px;background:#000;"></div>
<div style="position:absolute;left:0px;top:22px;width:51px;height:20px;background:#c0fefe;border-top:1px solid #fff;"></div>
<div style="position:absolute;left:36px;top:24px;width:15px;height:15px;background:#fff;border-top:2px solid #3c3c3c;border-left:2px solid #3c3c3c;border-right:1px solid #d4d0c8;border-bottom:1px solid #d4d0c8;"></div>
<svg style="position:absolute;left:36px;top:24px" width="15" height="15"><path d="M3.2 6.6 L6.4 10.6 L12.6 3.4" fill="none" stroke="#000" stroke-width="2.2"/></svg>
<div id="t75" style="position:absolute;left:24.6px;top:26.69px;font:bold 11px 'Liberation Sans', sans-serif;line-height:11px;color:#ff0000;white-space:pre;transform:translateX(-50%) scaleX(0.9500);transform-origin:center 50%;">3</div>
<div style="position:absolute;left:52px;top:22px;width:266px;height:20px;overflow:hidden;">
<div id="t76" style="position:absolute;left:3.200000000000003px;top:4.84px;font:bold 12px 'Liberation Sans', sans-serif;line-height:12px;color:#ff0000;white-space:pre;transform:scaleX(0.9365);transform-origin:left 50%;">OPTICAL TECHNOLOGIES SAC</div>
</div>
<div id="t77" style="position:absolute;left:395.4px;top:26.84px;font:bold 12px 'Liberation Sans', sans-serif;line-height:12px;color:#ff0000;white-space:pre;transform:translateX(-100%);transform-origin:right 50%;">916.40</div>
<div id="t78" style="position:absolute;left:475.4px;top:26.84px;font:bold 12px 'Liberation Sans', sans-serif;line-height:12px;color:#ff0000;white-space:pre;transform:translateX(-100%);transform-origin:right 50%;">164.95</div>
<div id="t79" style="position:absolute;left:555.4px;top:26.84px;font:bold 12px 'Liberation Sans', sans-serif;line-height:12px;color:#ff0000;white-space:pre;transform:translateX(-100%);transform-origin:right 50%;">0.00</div>
<div id="t80" style="position:absolute;left:635.4px;top:26.84px;font:bold 12px 'Liberation Sans', sans-serif;line-height:12px;color:#ff0000;white-space:pre;transform:translateX(-100%);transform-origin:right 50%;">0.00</div>
<div id="t81" style="position:absolute;left:715.4px;top:26.84px;font:bold 12px 'Liberation Sans', sans-serif;line-height:12px;color:#ff0000;white-space:pre;transform:translateX(-100%);transform-origin:right 50%;">0.00</div>
<div id="t82" style="position:absolute;left:795.4px;top:26.84px;font:bold 12px 'Liberation Sans', sans-serif;line-height:12px;color:#ff0000;white-space:pre;transform:translateX(-100%);transform-origin:right 50%;">0.00</div>
<div id="t83" style="position:absolute;left:875.4px;top:26.84px;font:bold 12px 'Liberation Sans', sans-serif;line-height:12px;color:#ff0000;white-space:pre;transform:translateX(-100%);transform-origin:right 50%;">0.00</div>
<div id="t84" style="position:absolute;left:955.4px;top:26.84px;font:bold 12px 'Liberation Sans', sans-serif;line-height:12px;color:#ff0000;white-space:pre;transform:translateX(-100%);transform-origin:right 50%;">0.00</div>
<div id="t85" style="position:absolute;left:1035.4px;top:26.84px;font:bold 12px 'Liberation Sans', sans-serif;line-height:12px;color:#ff0000;white-space:pre;transform:translateX(-100%);transform-origin:right 50%;">0.00</div>
<div id="t86" style="position:absolute;left:1115.4px;top:26.84px;font:bold 12px 'Liberation Sans', sans-serif;line-height:12px;color:#ff0000;white-space:pre;transform:translateX(-100%);transform-origin:right 50%;">0.00</div>
<div id="t87" style="position:absolute;left:1195.4px;top:26.84px;font:bold 12px 'Liberation Sans', sans-serif;line-height:12px;color:#ff0000;white-space:pre;transform:translateX(-100%);transform-origin:right 50%;">1081.35</div>
<div id="t88" style="position:absolute;left:1225px;top:26.84px;font:bold 12px 'Liberation Sans', sans-serif;line-height:12px;color:#ff0000;white-space:pre;transform:translateX(-50%);transform-origin:center 50%;">PEN</div>
<div style="position:absolute;left:0px;top:42px;width:1329px;height:1px;background:#000;"></div>
<div style="position:absolute;left:0px;top:43px;width:51px;height:20px;background:#ff0000;border-top:1px solid #fff;"></div>
<div style="position:absolute;left:36px;top:45px;width:15px;height:15px;background:#fff;border-top:2px solid #3c3c3c;border-left:2px solid #3c3c3c;border-right:1px solid #d4d0c8;border-bottom:1px solid #d4d0c8;"></div>
<svg style="position:absolute;left:36px;top:45px" width="15" height="15"><path d="M3.2 6.6 L6.4 10.6 L12.6 3.4" fill="none" stroke="#000" stroke-width="2.2"/></svg>
<div id="t89" style="position:absolute;left:24.6px;top:47.69px;font:normal 11px 'Liberation Sans', sans-serif;line-height:11px;color:#fff;white-space:pre;transform:translateX(-50%);transform-origin:center 50%;">41</div>
<div style="position:absolute;left:52px;top:43px;width:266px;height:20px;overflow:hidden;">
<div id="t90" style="position:absolute;left:3.200000000000003px;top:4.84px;font:normal 12px 'Liberation Sans', sans-serif;line-height:12px;color:#14149a;white-space:pre;transform:scaleX(0.9804);transform-origin:left 50%;">DH EMPRESAS PERU S.A.</div>
</div>
<div style="position:absolute;left:319px;top:43px;width:79px;height:20px;background:#ff0000;"></div>
<div id="t91" style="position:absolute;left:395.4px;top:47.84px;font:normal 12px 'Liberation Sans', sans-serif;line-height:12px;color:#fff;white-space:pre;transform:translateX(-100%);transform-origin:right 50%;">125.84</div>
<div id="t92" style="position:absolute;left:475.4px;top:47.84px;font:normal 12px 'Liberation Sans', sans-serif;line-height:12px;color:#14149a;white-space:pre;transform:translateX(-100%);transform-origin:right 50%;">22.65</div>
<div id="t93" style="position:absolute;left:555.4px;top:47.84px;font:normal 12px 'Liberation Sans', sans-serif;line-height:12px;color:#14149a;white-space:pre;transform:translateX(-100%);transform-origin:right 50%;">0.00</div>
<div id="t94" style="position:absolute;left:635.4px;top:47.84px;font:normal 12px 'Liberation Sans', sans-serif;line-height:12px;color:#14149a;white-space:pre;transform:translateX(-100%);transform-origin:right 50%;">0.00</div>
<div id="t95" style="position:absolute;left:715.4px;top:47.84px;font:normal 12px 'Liberation Sans', sans-serif;line-height:12px;color:#14149a;white-space:pre;transform:translateX(-100%);transform-origin:right 50%;">0.00</div>
<div id="t96" style="position:absolute;left:795.4px;top:47.84px;font:normal 12px 'Liberation Sans', sans-serif;line-height:12px;color:#14149a;white-space:pre;transform:translateX(-100%);transform-origin:right 50%;">0.00</div>
<div style="position:absolute;left:799px;top:43px;width:79px;height:20px;background:#ff0000;"></div>
<div id="t97" style="position:absolute;left:875.4px;top:47.84px;font:normal 12px 'Liberation Sans', sans-serif;line-height:12px;color:#fff;white-space:pre;transform:translateX(-100%);transform-origin:right 50%;">0.01</div>
<div id="t98" style="position:absolute;left:955.4px;top:47.84px;font:normal 12px 'Liberation Sans', sans-serif;line-height:12px;color:#14149a;white-space:pre;transform:translateX(-100%);transform-origin:right 50%;">0.00</div>
<div id="t99" style="position:absolute;left:1035.4px;top:47.84px;font:normal 12px 'Liberation Sans', sans-serif;line-height:12px;color:#14149a;white-space:pre;transform:translateX(-100%);transform-origin:right 50%;">0.00</div>
<div id="t100" style="position:absolute;left:1115.4px;top:47.84px;font:normal 12px 'Liberation Sans', sans-serif;line-height:12px;color:#14149a;white-space:pre;transform:translateX(-100%);transform-origin:right 50%;">0.00</div>
<div id="t101" style="position:absolute;left:1195.4px;top:47.84px;font:normal 12px 'Liberation Sans', sans-serif;line-height:12px;color:#14149a;white-space:pre;transform:translateX(-100%);transform-origin:right 50%;">148.50</div>
<div id="t102" style="position:absolute;left:1225px;top:47.84px;font:normal 12px 'Liberation Sans', sans-serif;line-height:12px;color:#14149a;white-space:pre;transform:translateX(-50%);transform-origin:center 50%;">PEN</div>
<div style="position:absolute;left:0px;top:63px;width:1329px;height:1px;background:#000;"></div>
<div style="position:absolute;left:0px;top:64px;width:51px;height:20px;background:#ff0000;border-top:1px solid #fff;"></div>
<div style="position:absolute;left:36px;top:66px;width:15px;height:15px;background:#fff;border-top:2px solid #3c3c3c;border-left:2px solid #3c3c3c;border-right:1px solid #d4d0c8;border-bottom:1px solid #d4d0c8;"></div>
<svg style="position:absolute;left:36px;top:66px" width="15" height="15"><path d="M3.2 6.6 L6.4 10.6 L12.6 3.4" fill="none" stroke="#000" stroke-width="2.2"/></svg>
<div id="t103" style="position:absolute;left:24.6px;top:68.69px;font:normal 11px 'Liberation Sans', sans-serif;line-height:11px;color:#fff;white-space:pre;transform:translateX(-50%);transform-origin:center 50%;">45</div>
<div style="position:absolute;left:52px;top:64px;width:266px;height:20px;overflow:hidden;">
<div id="t104" style="position:absolute;left:3.200000000000003px;top:4.84px;font:normal 12px 'Liberation Sans', sans-serif;line-height:12px;color:#14149a;white-space:pre;transform:scaleX(0.9601);transform-origin:left 50%;">COMPAÑIA FOOD RETAIL S.A.C.</div>
</div>
<div id="t105" style="position:absolute;left:395.4px;top:68.84px;font:normal 12px 'Liberation Sans', sans-serif;line-height:12px;color:#14149a;white-space:pre;transform:translateX(-100%);transform-origin:right 50%;">41.44</div>
<div id="t106" style="position:absolute;left:475.4px;top:68.84px;font:normal 12px 'Liberation Sans', sans-serif;line-height:12px;color:#14149a;white-space:pre;transform:translateX(-100%);transform-origin:right 50%;">7.46</div>
<div id="t107" style="position:absolute;left:555.4px;top:68.84px;font:normal 12px 'Liberation Sans', sans-serif;line-height:12px;color:#14149a;white-space:pre;transform:translateX(-100%);transform-origin:right 50%;">0.00</div>
<div id="t108" style="position:absolute;left:635.4px;top:68.84px;font:normal 12px 'Liberation Sans', sans-serif;line-height:12px;color:#14149a;white-space:pre;transform:translateX(-100%);transform-origin:right 50%;">0.00</div>
<div id="t109" style="position:absolute;left:715.4px;top:68.84px;font:normal 12px 'Liberation Sans', sans-serif;line-height:12px;color:#14149a;white-space:pre;transform:translateX(-100%);transform-origin:right 50%;">0.00</div>
<div id="t110" style="position:absolute;left:795.4px;top:68.84px;font:normal 12px 'Liberation Sans', sans-serif;line-height:12px;color:#14149a;white-space:pre;transform:translateX(-100%);transform-origin:right 50%;">0.00</div>
<div style="position:absolute;left:799px;top:64px;width:79px;height:20px;background:#ff0000;"></div>
<div id="t111" style="position:absolute;left:875.4px;top:68.84px;font:normal 12px 'Liberation Sans', sans-serif;line-height:12px;color:#fff;white-space:pre;transform:translateX(-100%);transform-origin:right 50%;">0.00</div>
<div id="t112" style="position:absolute;left:955.4px;top:68.84px;font:normal 12px 'Liberation Sans', sans-serif;line-height:12px;color:#14149a;white-space:pre;transform:translateX(-100%);transform-origin:right 50%;">0.00</div>
<div id="t113" style="position:absolute;left:1035.4px;top:68.84px;font:normal 12px 'Liberation Sans', sans-serif;line-height:12px;color:#14149a;white-space:pre;transform:translateX(-100%);transform-origin:right 50%;">0.00</div>
<div style="position:absolute;left:1039px;top:64px;width:79px;height:20px;background:#ff0000;"></div>
<div id="t114" style="position:absolute;left:1115.4px;top:68.84px;font:normal 12px 'Liberation Sans', sans-serif;line-height:12px;color:#fff;white-space:pre;transform:translateX(-100%);transform-origin:right 50%;">0.00</div>
<div style="position:absolute;left:1119px;top:64px;width:79px;height:20px;background:#ff0000;"></div>
<div id="t115" style="position:absolute;left:1195.4px;top:68.84px;font:normal 12px 'Liberation Sans', sans-serif;line-height:12px;color:#fff;white-space:pre;transform:translateX(-100%);transform-origin:right 50%;">48.90</div>
<div id="t116" style="position:absolute;left:1225px;top:68.84px;font:normal 12px 'Liberation Sans', sans-serif;line-height:12px;color:#14149a;white-space:pre;transform:translateX(-50%);transform-origin:center 50%;">PEN</div>
<div style="position:absolute;left:0px;top:84px;width:1329px;height:1px;background:#000;"></div>
<div style="position:absolute;left:0px;top:85px;width:51px;height:20px;background:#ff0000;border-top:1px solid #fff;"></div>
<div style="position:absolute;left:36px;top:87px;width:15px;height:15px;background:#fff;border-top:2px solid #3c3c3c;border-left:2px solid #3c3c3c;border-right:1px solid #d4d0c8;border-bottom:1px solid #d4d0c8;"></div>
<svg style="position:absolute;left:36px;top:87px" width="15" height="15"><path d="M3.2 6.6 L6.4 10.6 L12.6 3.4" fill="none" stroke="#000" stroke-width="2.2"/></svg>
<div id="t117" style="position:absolute;left:24.6px;top:89.69px;font:normal 11px 'Liberation Sans', sans-serif;line-height:11px;color:#fff;white-space:pre;transform:translateX(-50%);transform-origin:center 50%;">64</div>
<div style="position:absolute;left:52px;top:85px;width:266px;height:20px;overflow:hidden;">
<div id="t118" style="position:absolute;left:3.200000000000003px;top:4.84px;font:normal 12px 'Liberation Sans', sans-serif;line-height:12px;color:#14149a;white-space:pre;transform:scaleX(0.9846);transform-origin:left 50%;">JOHNSON S.A.C.</div>
</div>
<div style="position:absolute;left:319px;top:85px;width:79px;height:20px;background:#ff0000;"></div>
<div id="t119" style="position:absolute;left:395.4px;top:89.84px;font:normal 12px 'Liberation Sans', sans-serif;line-height:12px;color:#fff;white-space:pre;transform:translateX(-100%);transform-origin:right 50%;">67.73</div>
<div id="t120" style="position:absolute;left:475.4px;top:89.84px;font:normal 12px 'Liberation Sans', sans-serif;line-height:12px;color:#14149a;white-space:pre;transform:translateX(-100%);transform-origin:right 50%;">6.77</div>
<div id="t121" style="position:absolute;left:555.4px;top:89.84px;font:normal 12px 'Liberation Sans', sans-serif;line-height:12px;color:#14149a;white-space:pre;transform:translateX(-100%);transform-origin:right 50%;">0.00</div>
<div id="t122" style="position:absolute;left:635.4px;top:89.84px;font:normal 12px 'Liberation Sans', sans-serif;line-height:12px;color:#14149a;white-space:pre;transform:translateX(-100%);transform-origin:right 50%;">0.00</div>
<div id="t123" style="position:absolute;left:715.4px;top:89.84px;font:normal 12px 'Liberation Sans', sans-serif;line-height:12px;color:#14149a;white-space:pre;transform:translateX(-100%);transform-origin:right 50%;">0.00</div>
<div id="t124" style="position:absolute;left:795.4px;top:89.84px;font:normal 12px 'Liberation Sans', sans-serif;line-height:12px;color:#14149a;white-space:pre;transform:translateX(-100%);transform-origin:right 50%;">0.00</div>
<div id="t125" style="position:absolute;left:875.4px;top:89.84px;font:normal 12px 'Liberation Sans', sans-serif;line-height:12px;color:#14149a;white-space:pre;transform:translateX(-100%);transform-origin:right 50%;">0.00</div>
<div id="t126" style="position:absolute;left:955.4px;top:89.84px;font:normal 12px 'Liberation Sans', sans-serif;line-height:12px;color:#14149a;white-space:pre;transform:translateX(-100%);transform-origin:right 50%;">0.00</div>
<div id="t127" style="position:absolute;left:1035.4px;top:89.84px;font:normal 12px 'Liberation Sans', sans-serif;line-height:12px;color:#14149a;white-space:pre;transform:translateX(-100%);transform-origin:right 50%;">0.00</div>
<div id="t128" style="position:absolute;left:1115.4px;top:89.84px;font:normal 12px 'Liberation Sans', sans-serif;line-height:12px;color:#14149a;white-space:pre;transform:translateX(-100%);transform-origin:right 50%;">0.00</div>
<div id="t129" style="position:absolute;left:1195.4px;top:89.84px;font:normal 12px 'Liberation Sans', sans-serif;line-height:12px;color:#14149a;white-space:pre;transform:translateX(-100%);transform-origin:right 50%;">74.50</div>
<div id="t130" style="position:absolute;left:1225px;top:89.84px;font:normal 12px 'Liberation Sans', sans-serif;line-height:12px;color:#14149a;white-space:pre;transform:translateX(-50%);transform-origin:center 50%;">PEN</div>
<div style="position:absolute;left:0px;top:105px;width:1329px;height:1px;background:#000;"></div>
<div style="position:absolute;left:0px;top:106px;width:51px;height:20px;background:#c0fefe;border-top:1px solid #fff;"></div>
<div style="position:absolute;left:36px;top:108px;width:15px;height:15px;background:#fff;border-top:2px solid #3c3c3c;border-left:2px solid #3c3c3c;border-right:1px solid #d4d0c8;border-bottom:1px solid #d4d0c8;"></div>
<svg style="position:absolute;left:36px;top:108px" width="15" height="15"><path d="M3.2 6.6 L6.4 10.6 L12.6 3.4" fill="none" stroke="#000" stroke-width="2.2"/></svg>
<div id="t131" style="position:absolute;left:24.6px;top:110.69px;font:bold 11px 'Liberation Sans', sans-serif;line-height:11px;color:#ff0000;white-space:pre;transform:translateX(-50%) scaleX(0.9500);transform-origin:center 50%;">66</div>
<div style="position:absolute;left:52px;top:106px;width:266px;height:20px;overflow:hidden;">
<div id="t132" style="position:absolute;left:3.200000000000003px;top:4.84px;font:bold 12px 'Liberation Sans', sans-serif;line-height:12px;color:#ff0000;white-space:pre;transform:scaleX(0.9288);transform-origin:left 50%;">GASES KADOSH E.I.R.L.</div>
</div>
<div id="t133" style="position:absolute;left:395.4px;top:110.84px;font:bold 12px 'Liberation Sans', sans-serif;line-height:12px;color:#ff0000;white-space:pre;transform:translateX(-100%);transform-origin:right 50%;">275.50</div>
<div id="t134" style="position:absolute;left:475.4px;top:110.84px;font:bold 12px 'Liberation Sans', sans-serif;line-height:12px;color:#ff0000;white-space:pre;transform:translateX(-100%);transform-origin:right 50%;">49.59</div>
<div id="t135" style="position:absolute;left:555.4px;top:110.84px;font:bold 12px 'Liberation Sans', sans-serif;line-height:12px;color:#ff0000;white-space:pre;transform:translateX(-100%);transform-origin:right 50%;">0.00</div>
<div id="t136" style="position:absolute;left:635.4px;top:110.84px;font:bold 12px 'Liberation Sans', sans-serif;line-height:12px;color:#ff0000;white-space:pre;transform:translateX(-100%);transform-origin:right 50%;">0.00</div>
<div id="t137" style="position:absolute;left:715.4px;top:110.84px;font:bold 12px 'Liberation Sans', sans-serif;line-height:12px;color:#ff0000;white-space:pre;transform:translateX(-100%);transform-origin:right 50%;">0.00</div>
<div id="t138" style="position:absolute;left:795.4px;top:110.84px;font:bold 12px 'Liberation Sans', sans-serif;line-height:12px;color:#ff0000;white-space:pre;transform:translateX(-100%);transform-origin:right 50%;">0.00</div>
<div id="t139" style="position:absolute;left:875.4px;top:110.84px;font:bold 12px 'Liberation Sans', sans-serif;line-height:12px;color:#ff0000;white-space:pre;transform:translateX(-100%);transform-origin:right 50%;">0.00</div>
<div id="t140" style="position:absolute;left:955.4px;top:110.84px;font:bold 12px 'Liberation Sans', sans-serif;line-height:12px;color:#ff0000;white-space:pre;transform:translateX(-100%);transform-origin:right 50%;">0.00</div>
<div id="t141" style="position:absolute;left:1035.4px;top:110.84px;font:bold 12px 'Liberation Sans', sans-serif;line-height:12px;color:#ff0000;white-space:pre;transform:translateX(-100%);transform-origin:right 50%;">0.00</div>
<div id="t142" style="position:absolute;left:1115.4px;top:110.84px;font:bold 12px 'Liberation Sans', sans-serif;line-height:12px;color:#ff0000;white-space:pre;transform:translateX(-100%);transform-origin:right 50%;">0.00</div>
<div id="t143" style="position:absolute;left:1195.4px;top:110.84px;font:bold 12px 'Liberation Sans', sans-serif;line-height:12px;color:#ff0000;white-space:pre;transform:translateX(-100%);transform-origin:right 50%;">325.09</div>
<div id="t144" style="position:absolute;left:1225px;top:110.84px;font:bold 12px 'Liberation Sans', sans-serif;line-height:12px;color:#ff0000;white-space:pre;transform:translateX(-50%);transform-origin:center 50%;">PEN</div>
<div style="position:absolute;left:0px;top:126px;width:1329px;height:1px;background:#000;"></div>
<div style="position:absolute;left:0px;top:127px;width:51px;height:20px;background:#c0fefe;border-top:1px solid #fff;"></div>
<div style="position:absolute;left:36px;top:129px;width:15px;height:15px;background:#fff;border-top:2px solid #3c3c3c;border-left:2px solid #3c3c3c;border-right:1px solid #d4d0c8;border-bottom:1px solid #d4d0c8;"></div>
<svg style="position:absolute;left:36px;top:129px" width="15" height="15"><path d="M3.2 6.6 L6.4 10.6 L12.6 3.4" fill="none" stroke="#000" stroke-width="2.2"/></svg>
<div id="t145" style="position:absolute;left:24.6px;top:131.69px;font:bold 11px 'Liberation Sans', sans-serif;line-height:11px;color:#ff0000;white-space:pre;transform:translateX(-50%) scaleX(0.9500);transform-origin:center 50%;">68</div>
<div style="position:absolute;left:52px;top:127px;width:266px;height:20px;overflow:hidden;">
<div id="t146" style="position:absolute;left:3.200000000000003px;top:4.84px;font:bold 12px 'Liberation Sans', sans-serif;line-height:12px;color:#ff0000;white-space:pre;transform:scaleX(0.9429);transform-origin:left 50%;">AMERICA MOVIL PERU S.A.C.</div>
</div>
<div id="t147" style="position:absolute;left:395.4px;top:131.84px;font:bold 12px 'Liberation Sans', sans-serif;line-height:12px;color:#ff0000;white-space:pre;transform:translateX(-100%);transform-origin:right 50%;">122.03</div>
<div id="t148" style="position:absolute;left:475.4px;top:131.84px;font:bold 12px 'Liberation Sans', sans-serif;line-height:12px;color:#ff0000;white-space:pre;transform:translateX(-100%);transform-origin:right 50%;">21.97</div>
<div id="t149" style="position:absolute;left:555.4px;top:131.84px;font:bold 12px 'Liberation Sans', sans-serif;line-height:12px;color:#ff0000;white-space:pre;transform:translateX(-100%);transform-origin:right 50%;">0.00</div>
<div id="t150" style="position:absolute;left:635.4px;top:131.84px;font:bold 12px 'Liberation Sans', sans-serif;line-height:12px;color:#ff0000;white-space:pre;transform:translateX(-100%);transform-origin:right 50%;">0.00</div>
<div id="t151" style="position:absolute;left:715.4px;top:131.84px;font:bold 12px 'Liberation Sans', sans-serif;line-height:12px;color:#ff0000;white-space:pre;transform:translateX(-100%);transform-origin:right 50%;">0.00</div>
<div id="t152" style="position:absolute;left:795.4px;top:131.84px;font:bold 12px 'Liberation Sans', sans-serif;line-height:12px;color:#ff0000;white-space:pre;transform:translateX(-100%);transform-origin:right 50%;">0.00</div>
<div id="t153" style="position:absolute;left:875.4px;top:131.84px;font:bold 12px 'Liberation Sans', sans-serif;line-height:12px;color:#ff0000;white-space:pre;transform:translateX(-100%);transform-origin:right 50%;">0.00</div>
<div id="t154" style="position:absolute;left:955.4px;top:131.84px;font:bold 12px 'Liberation Sans', sans-serif;line-height:12px;color:#ff0000;white-space:pre;transform:translateX(-100%);transform-origin:right 50%;">0.00</div>
<div id="t155" style="position:absolute;left:1035.4px;top:131.84px;font:bold 12px 'Liberation Sans', sans-serif;line-height:12px;color:#ff0000;white-space:pre;transform:translateX(-100%);transform-origin:right 50%;">0.00</div>
<div id="t156" style="position:absolute;left:1115.4px;top:131.84px;font:bold 12px 'Liberation Sans', sans-serif;line-height:12px;color:#ff0000;white-space:pre;transform:translateX(-100%);transform-origin:right 50%;">0.00</div>
<div id="t157" style="position:absolute;left:1195.4px;top:131.84px;font:bold 12px 'Liberation Sans', sans-serif;line-height:12px;color:#ff0000;white-space:pre;transform:translateX(-100%);transform-origin:right 50%;">144.00</div>
<div id="t158" style="position:absolute;left:1225px;top:131.84px;font:bold 12px 'Liberation Sans', sans-serif;line-height:12px;color:#ff0000;white-space:pre;transform:translateX(-50%);transform-origin:center 50%;">PEN</div>
<div style="position:absolute;left:0px;top:147px;width:1329px;height:1px;background:#000;"></div>
<div style="position:absolute;left:0px;top:148px;width:51px;height:20px;background:#c0fefe;border-top:1px solid #fff;"></div>
<div style="position:absolute;left:36px;top:150px;width:15px;height:15px;background:#fff;border-top:2px solid #3c3c3c;border-left:2px solid #3c3c3c;border-right:1px solid #d4d0c8;border-bottom:1px solid #d4d0c8;"></div>
<svg style="position:absolute;left:36px;top:150px" width="15" height="15"><path d="M3.2 6.6 L6.4 10.6 L12.6 3.4" fill="none" stroke="#000" stroke-width="2.2"/></svg>
<div id="t159" style="position:absolute;left:24.6px;top:152.69px;font:bold 11px 'Liberation Sans', sans-serif;line-height:11px;color:#ff0000;white-space:pre;transform:translateX(-50%) scaleX(0.9500);transform-origin:center 50%;">69</div>
<div style="position:absolute;left:52px;top:148px;width:266px;height:20px;overflow:hidden;">
<div id="t160" style="position:absolute;left:3.200000000000003px;top:4.84px;font:bold 12px 'Liberation Sans', sans-serif;line-height:12px;color:#ff0000;white-space:pre;transform:scaleX(0.9429);transform-origin:left 50%;">AMERICA MOVIL PERU S.A.C.</div>
</div>
<div id="t161" style="position:absolute;left:395.4px;top:152.84px;font:bold 12px 'Liberation Sans', sans-serif;line-height:12px;color:#ff0000;white-space:pre;transform:translateX(-100%);transform-origin:right 50%;">122.03</div>
<div id="t162" style="position:absolute;left:475.4px;top:152.84px;font:bold 12px 'Liberation Sans', sans-serif;line-height:12px;color:#ff0000;white-space:pre;transform:translateX(-100%);transform-origin:right 50%;">21.97</div>
<div id="t163" style="position:absolute;left:555.4px;top:152.84px;font:bold 12px 'Liberation Sans', sans-serif;line-height:12px;color:#ff0000;white-space:pre;transform:translateX(-100%);transform-origin:right 50%;">0.00</div>
<div id="t164" style="position:absolute;left:635.4px;top:152.84px;font:bold 12px 'Liberation Sans', sans-serif;line-height:12px;color:#ff0000;white-space:pre;transform:translateX(-100%);transform-origin:right 50%;">0.00</div>
<div id="t165" style="position:absolute;left:715.4px;top:152.84px;font:bold 12px 'Liberation Sans', sans-serif;line-height:12px;color:#ff0000;white-space:pre;transform:translateX(-100%);transform-origin:right 50%;">0.00</div>
<div id="t166" style="position:absolute;left:795.4px;top:152.84px;font:bold 12px 'Liberation Sans', sans-serif;line-height:12px;color:#ff0000;white-space:pre;transform:translateX(-100%);transform-origin:right 50%;">0.00</div>
<div id="t167" style="position:absolute;left:875.4px;top:152.84px;font:bold 12px 'Liberation Sans', sans-serif;line-height:12px;color:#ff0000;white-space:pre;transform:translateX(-100%);transform-origin:right 50%;">0.00</div>
<div id="t168" style="position:absolute;left:955.4px;top:152.84px;font:bold 12px 'Liberation Sans', sans-serif;line-height:12px;color:#ff0000;white-space:pre;transform:translateX(-100%);transform-origin:right 50%;">0.00</div>
<div id="t169" style="position:absolute;left:1035.4px;top:152.84px;font:bold 12px 'Liberation Sans', sans-serif;line-height:12px;color:#ff0000;white-space:pre;transform:translateX(-100%);transform-origin:right 50%;">0.00</div>
<div id="t170" style="position:absolute;left:1115.4px;top:152.84px;font:bold 12px 'Liberation Sans', sans-serif;line-height:12px;color:#ff0000;white-space:pre;transform:translateX(-100%);transform-origin:right 50%;">0.00</div>
<div id="t171" style="position:absolute;left:1195.4px;top:152.84px;font:bold 12px 'Liberation Sans', sans-serif;line-height:12px;color:#ff0000;white-space:pre;transform:translateX(-100%);transform-origin:right 50%;">144.00</div>
<div id="t172" style="position:absolute;left:1225px;top:152.84px;font:bold 12px 'Liberation Sans', sans-serif;line-height:12px;color:#ff0000;white-space:pre;transform:translateX(-50%);transform-origin:center 50%;">PEN</div>
<div style="position:absolute;left:0px;top:168px;width:1329px;height:1px;background:#000;"></div>
<div style="position:absolute;left:0px;top:169px;width:51px;height:20px;background:#c0fefe;border-top:1px solid #fff;"></div>
<div style="position:absolute;left:36px;top:171px;width:15px;height:15px;background:#fff;border-top:2px solid #3c3c3c;border-left:2px solid #3c3c3c;border-right:1px solid #d4d0c8;border-bottom:1px solid #d4d0c8;"></div>
<svg style="position:absolute;left:36px;top:171px" width="15" height="15"><path d="M3.2 6.6 L6.4 10.6 L12.6 3.4" fill="none" stroke="#000" stroke-width="2.2"/></svg>
<div id="t173" style="position:absolute;left:24.6px;top:173.69px;font:bold 11px 'Liberation Sans', sans-serif;line-height:11px;color:#ff0000;white-space:pre;transform:translateX(-50%) scaleX(0.9500);transform-origin:center 50%;">70</div>
<div style="position:absolute;left:52px;top:169px;width:266px;height:20px;overflow:hidden;">
<div id="t174" style="position:absolute;left:3.200000000000003px;top:4.84px;font:bold 12px 'Liberation Sans', sans-serif;line-height:12px;color:#ff0000;white-space:pre;transform:scaleX(0.9429);transform-origin:left 50%;">AMERICA MOVIL PERU S.A.C.</div>
</div>
<div id="t175" style="position:absolute;left:395.4px;top:173.84px;font:bold 12px 'Liberation Sans', sans-serif;line-height:12px;color:#ff0000;white-space:pre;transform:translateX(-100%);transform-origin:right 50%;">122.03</div>
<div id="t176" style="position:absolute;left:475.4px;top:173.84px;font:bold 12px 'Liberation Sans', sans-serif;line-height:12px;color:#ff0000;white-space:pre;transform:translateX(-100%);transform-origin:right 50%;">21.97</div>
<div id="t177" style="position:absolute;left:555.4px;top:173.84px;font:bold 12px 'Liberation Sans', sans-serif;line-height:12px;color:#ff0000;white-space:pre;transform:translateX(-100%);transform-origin:right 50%;">0.00</div>
<div id="t178" style="position:absolute;left:635.4px;top:173.84px;font:bold 12px 'Liberation Sans', sans-serif;line-height:12px;color:#ff0000;white-space:pre;transform:translateX(-100%);transform-origin:right 50%;">0.00</div>
<div id="t179" style="position:absolute;left:715.4px;top:173.84px;font:bold 12px 'Liberation Sans', sans-serif;line-height:12px;color:#ff0000;white-space:pre;transform:translateX(-100%);transform-origin:right 50%;">0.00</div>
<div id="t180" style="position:absolute;left:795.4px;top:173.84px;font:bold 12px 'Liberation Sans', sans-serif;line-height:12px;color:#ff0000;white-space:pre;transform:translateX(-100%);transform-origin:right 50%;">0.00</div>
<div id="t181" style="position:absolute;left:875.4px;top:173.84px;font:bold 12px 'Liberation Sans', sans-serif;line-height:12px;color:#ff0000;white-space:pre;transform:translateX(-100%);transform-origin:right 50%;">0.00</div>
<div id="t182" style="position:absolute;left:955.4px;top:173.84px;font:bold 12px 'Liberation Sans', sans-serif;line-height:12px;color:#ff0000;white-space:pre;transform:translateX(-100%);transform-origin:right 50%;">0.00</div>
<div id="t183" style="position:absolute;left:1035.4px;top:173.84px;font:bold 12px 'Liberation Sans', sans-serif;line-height:12px;color:#ff0000;white-space:pre;transform:translateX(-100%);transform-origin:right 50%;">0.00</div>
<div id="t184" style="position:absolute;left:1115.4px;top:173.84px;font:bold 12px 'Liberation Sans', sans-serif;line-height:12px;color:#ff0000;white-space:pre;transform:translateX(-100%);transform-origin:right 50%;">0.00</div>
<div id="t185" style="position:absolute;left:1195.4px;top:173.84px;font:bold 12px 'Liberation Sans', sans-serif;line-height:12px;color:#ff0000;white-space:pre;transform:translateX(-100%);transform-origin:right 50%;">144.00</div>
<div id="t186" style="position:absolute;left:1225px;top:173.84px;font:bold 12px 'Liberation Sans', sans-serif;line-height:12px;color:#ff0000;white-space:pre;transform:translateX(-50%);transform-origin:center 50%;">PEN</div>
<div style="position:absolute;left:0px;top:189px;width:1329px;height:1px;background:#000;"></div>
<div style="position:absolute;left:0px;top:190px;width:51px;height:20px;background:#c0fefe;border-top:1px solid #fff;"></div>
<div style="position:absolute;left:36px;top:192px;width:15px;height:15px;background:#fff;border-top:2px solid #3c3c3c;border-left:2px solid #3c3c3c;border-right:1px solid #d4d0c8;border-bottom:1px solid #d4d0c8;"></div>
<svg style="position:absolute;left:36px;top:192px" width="15" height="15"><path d="M3.2 6.6 L6.4 10.6 L12.6 3.4" fill="none" stroke="#000" stroke-width="2.2"/></svg>
<div id="t187" style="position:absolute;left:24.6px;top:194.69px;font:bold 11px 'Liberation Sans', sans-serif;line-height:11px;color:#ff0000;white-space:pre;transform:translateX(-50%) scaleX(0.9500);transform-origin:center 50%;">71</div>
<div style="position:absolute;left:52px;top:190px;width:266px;height:20px;overflow:hidden;">
<div id="t188" style="position:absolute;left:3.200000000000003px;top:4.84px;font:bold 12px 'Liberation Sans', sans-serif;line-height:12px;color:#ff0000;white-space:pre;transform:scaleX(0.9429);transform-origin:left 50%;">AMERICA MOVIL PERU S.A.C.</div>
</div>
<div id="t189" style="position:absolute;left:395.4px;top:194.84px;font:bold 12px 'Liberation Sans', sans-serif;line-height:12px;color:#ff0000;white-space:pre;transform:translateX(-100%);transform-origin:right 50%;">109.32</div>
<div id="t190" style="position:absolute;left:475.4px;top:194.84px;font:bold 12px 'Liberation Sans', sans-serif;line-height:12px;color:#ff0000;white-space:pre;transform:translateX(-100%);transform-origin:right 50%;">19.68</div>
<div id="t191" style="position:absolute;left:555.4px;top:194.84px;font:bold 12px 'Liberation Sans', sans-serif;line-height:12px;color:#ff0000;white-space:pre;transform:translateX(-100%);transform-origin:right 50%;">0.00</div>
<div id="t192" style="position:absolute;left:635.4px;top:194.84px;font:bold 12px 'Liberation Sans', sans-serif;line-height:12px;color:#ff0000;white-space:pre;transform:translateX(-100%);transform-origin:right 50%;">0.00</div>
<div id="t193" style="position:absolute;left:715.4px;top:194.84px;font:bold 12px 'Liberation Sans', sans-serif;line-height:12px;color:#ff0000;white-space:pre;transform:translateX(-100%);transform-origin:right 50%;">0.00</div>
<div id="t194" style="position:absolute;left:795.4px;top:194.84px;font:bold 12px 'Liberation Sans', sans-serif;line-height:12px;color:#ff0000;white-space:pre;transform:translateX(-100%);transform-origin:right 50%;">0.00</div>
<div id="t195" style="position:absolute;left:875.4px;top:194.84px;font:bold 12px 'Liberation Sans', sans-serif;line-height:12px;color:#ff0000;white-space:pre;transform:translateX(-100%);transform-origin:right 50%;">0.00</div>
<div id="t196" style="position:absolute;left:955.4px;top:194.84px;font:bold 12px 'Liberation Sans', sans-serif;line-height:12px;color:#ff0000;white-space:pre;transform:translateX(-100%);transform-origin:right 50%;">0.00</div>
<div id="t197" style="position:absolute;left:1035.4px;top:194.84px;font:bold 12px 'Liberation Sans', sans-serif;line-height:12px;color:#ff0000;white-space:pre;transform:translateX(-100%);transform-origin:right 50%;">0.00</div>
<div id="t198" style="position:absolute;left:1115.4px;top:194.84px;font:bold 12px 'Liberation Sans', sans-serif;line-height:12px;color:#ff0000;white-space:pre;transform:translateX(-100%);transform-origin:right 50%;">0.00</div>
<div id="t199" style="position:absolute;left:1195.4px;top:194.84px;font:bold 12px 'Liberation Sans', sans-serif;line-height:12px;color:#ff0000;white-space:pre;transform:translateX(-100%);transform-origin:right 50%;">129.00</div>
<div id="t200" style="position:absolute;left:1225px;top:194.84px;font:bold 12px 'Liberation Sans', sans-serif;line-height:12px;color:#ff0000;white-space:pre;transform:translateX(-50%);transform-origin:center 50%;">PEN</div>
<div style="position:absolute;left:0px;top:210px;width:1329px;height:1px;background:#000;"></div>
<div style="position:absolute;left:0px;top:211px;width:51px;height:20px;background:#c0fefe;border-top:1px solid #fff;"></div>
<div style="position:absolute;left:36px;top:213px;width:15px;height:15px;background:#fff;border-top:2px solid #3c3c3c;border-left:2px solid #3c3c3c;border-right:1px solid #d4d0c8;border-bottom:1px solid #d4d0c8;"></div>
<svg style="position:absolute;left:36px;top:213px" width="15" height="15"><path d="M3.2 6.6 L6.4 10.6 L12.6 3.4" fill="none" stroke="#000" stroke-width="2.2"/></svg>
<div id="t201" style="position:absolute;left:24.6px;top:215.69px;font:bold 11px 'Liberation Sans', sans-serif;line-height:11px;color:#ff0000;white-space:pre;transform:translateX(-50%) scaleX(0.9500);transform-origin:center 50%;">72</div>
<div style="position:absolute;left:52px;top:211px;width:266px;height:20px;overflow:hidden;">
<div id="t202" style="position:absolute;left:3.200000000000003px;top:4.84px;font:bold 12px 'Liberation Sans', sans-serif;line-height:12px;color:#ff0000;white-space:pre;transform:scaleX(0.9429);transform-origin:left 50%;">AMERICA MOVIL PERU S.A.C.</div>
</div>
<div id="t203" style="position:absolute;left:395.4px;top:215.84px;font:bold 12px 'Liberation Sans', sans-serif;line-height:12px;color:#ff0000;white-space:pre;transform:translateX(-100%);transform-origin:right 50%;">122.03</div>
<div id="t204" style="position:absolute;left:475.4px;top:215.84px;font:bold 12px 'Liberation Sans', sans-serif;line-height:12px;color:#ff0000;white-space:pre;transform:translateX(-100%);transform-origin:right 50%;">21.97</div>
<div id="t205" style="position:absolute;left:555.4px;top:215.84px;font:bold 12px 'Liberation Sans', sans-serif;line-height:12px;color:#ff0000;white-space:pre;transform:translateX(-100%);transform-origin:right 50%;">0.00</div>
<div id="t206" style="position:absolute;left:635.4px;top:215.84px;font:bold 12px 'Liberation Sans', sans-serif;line-height:12px;color:#ff0000;white-space:pre;transform:translateX(-100%);transform-origin:right 50%;">0.00</div>
<div id="t207" style="position:absolute;left:715.4px;top:215.84px;font:bold 12px 'Liberation Sans', sans-serif;line-height:12px;color:#ff0000;white-space:pre;transform:translateX(-100%);transform-origin:right 50%;">0.00</div>
<div id="t208" style="position:absolute;left:795.4px;top:215.84px;font:bold 12px 'Liberation Sans', sans-serif;line-height:12px;color:#ff0000;white-space:pre;transform:translateX(-100%);transform-origin:right 50%;">0.00</div>
<div id="t209" style="position:absolute;left:875.4px;top:215.84px;font:bold 12px 'Liberation Sans', sans-serif;line-height:12px;color:#ff0000;white-space:pre;transform:translateX(-100%);transform-origin:right 50%;">0.00</div>
<div id="t210" style="position:absolute;left:955.4px;top:215.84px;font:bold 12px 'Liberation Sans', sans-serif;line-height:12px;color:#ff0000;white-space:pre;transform:translateX(-100%);transform-origin:right 50%;">0.00</div>
<div id="t211" style="position:absolute;left:1035.4px;top:215.84px;font:bold 12px 'Liberation Sans', sans-serif;line-height:12px;color:#ff0000;white-space:pre;transform:translateX(-100%);transform-origin:right 50%;">0.00</div>
<div id="t212" style="position:absolute;left:1115.4px;top:215.84px;font:bold 12px 'Liberation Sans', sans-serif;line-height:12px;color:#ff0000;white-space:pre;transform:translateX(-100%);transform-origin:right 50%;">0.00</div>
<div id="t213" style="position:absolute;left:1195.4px;top:215.84px;font:bold 12px 'Liberation Sans', sans-serif;line-height:12px;color:#ff0000;white-space:pre;transform:translateX(-100%);transform-origin:right 50%;">144.00</div>
<div id="t214" style="position:absolute;left:1225px;top:215.84px;font:bold 12px 'Liberation Sans', sans-serif;line-height:12px;color:#ff0000;white-space:pre;transform:translateX(-50%);transform-origin:center 50%;">PEN</div>
<div style="position:absolute;left:0px;top:231px;width:1329px;height:1px;background:#000;"></div>
<div style="position:absolute;left:0px;top:232px;width:51px;height:20px;background:#c0fefe;border-top:1px solid #fff;"></div>
<div style="position:absolute;left:36px;top:234px;width:15px;height:15px;background:#fff;border-top:2px solid #3c3c3c;border-left:2px solid #3c3c3c;border-right:1px solid #d4d0c8;border-bottom:1px solid #d4d0c8;"></div>
<svg style="position:absolute;left:36px;top:234px" width="15" height="15"><path d="M3.2 6.6 L6.4 10.6 L12.6 3.4" fill="none" stroke="#000" stroke-width="2.2"/></svg>
<div id="t215" style="position:absolute;left:24.6px;top:236.69px;font:bold 11px 'Liberation Sans', sans-serif;line-height:11px;color:#ff0000;white-space:pre;transform:translateX(-50%) scaleX(0.9500);transform-origin:center 50%;">74</div>
<div style="position:absolute;left:52px;top:232px;width:266px;height:20px;overflow:hidden;">
<div id="t216" style="position:absolute;left:3.200000000000003px;top:4.84px;font:bold 12px 'Liberation Sans', sans-serif;line-height:12px;color:#ff0000;white-space:pre;transform:scaleX(0.9463);transform-origin:left 50%;">LA VACA Y SUS AMIGOS S.A.C.</div>
</div>
<div id="t217" style="position:absolute;left:395.4px;top:236.84px;font:bold 12px 'Liberation Sans', sans-serif;line-height:12px;color:#ff0000;white-space:pre;transform:translateX(-100%);transform-origin:right 50%;">287.27</div>
<div id="t218" style="position:absolute;left:475.4px;top:236.84px;font:bold 12px 'Liberation Sans', sans-serif;line-height:12px;color:#ff0000;white-space:pre;transform:translateX(-100%);transform-origin:right 50%;">28.73</div>
<div id="t219" style="position:absolute;left:555.4px;top:236.84px;font:bold 12px 'Liberation Sans', sans-serif;line-height:12px;color:#ff0000;white-space:pre;transform:translateX(-100%);transform-origin:right 50%;">0.00</div>
<div id="t220" style="position:absolute;left:635.4px;top:236.84px;font:bold 12px 'Liberation Sans', sans-serif;line-height:12px;color:#ff0000;white-space:pre;transform:translateX(-100%);transform-origin:right 50%;">0.00</div>
<div id="t221" style="position:absolute;left:715.4px;top:236.84px;font:bold 12px 'Liberation Sans', sans-serif;line-height:12px;color:#ff0000;white-space:pre;transform:translateX(-100%);transform-origin:right 50%;">0.00</div>
<div id="t222" style="position:absolute;left:795.4px;top:236.84px;font:bold 12px 'Liberation Sans', sans-serif;line-height:12px;color:#ff0000;white-space:pre;transform:translateX(-100%);transform-origin:right 50%;">0.00</div>
<div id="t223" style="position:absolute;left:875.4px;top:236.84px;font:bold 12px 'Liberation Sans', sans-serif;line-height:12px;color:#ff0000;white-space:pre;transform:translateX(-100%);transform-origin:right 50%;">0.00</div>
<div id="t224" style="position:absolute;left:955.4px;top:236.84px;font:bold 12px 'Liberation Sans', sans-serif;line-height:12px;color:#ff0000;white-space:pre;transform:translateX(-100%);transform-origin:right 50%;">0.00</div>
<div id="t225" style="position:absolute;left:1035.4px;top:236.84px;font:bold 12px 'Liberation Sans', sans-serif;line-height:12px;color:#ff0000;white-space:pre;transform:translateX(-100%);transform-origin:right 50%;">0.00</div>
<div id="t226" style="position:absolute;left:1115.4px;top:236.84px;font:bold 12px 'Liberation Sans', sans-serif;line-height:12px;color:#ff0000;white-space:pre;transform:translateX(-100%);transform-origin:right 50%;">0.00</div>
<div id="t227" style="position:absolute;left:1195.4px;top:236.84px;font:bold 12px 'Liberation Sans', sans-serif;line-height:12px;color:#ff0000;white-space:pre;transform:translateX(-100%);transform-origin:right 50%;">316.00</div>
<div id="t228" style="position:absolute;left:1225px;top:236.84px;font:bold 12px 'Liberation Sans', sans-serif;line-height:12px;color:#ff0000;white-space:pre;transform:translateX(-50%);transform-origin:center 50%;">PEN</div>
<div style="position:absolute;left:0px;top:252px;width:1329px;height:1px;background:#000;"></div>
<div style="position:absolute;left:0px;top:253px;width:51px;height:20px;background:#c0fefe;border-top:1px solid #fff;"></div>
<div style="position:absolute;left:36px;top:255px;width:15px;height:15px;background:#fff;border-top:2px solid #3c3c3c;border-left:2px solid #3c3c3c;border-right:1px solid #d4d0c8;border-bottom:1px solid #d4d0c8;"></div>
<svg style="position:absolute;left:36px;top:255px" width="15" height="15"><path d="M3.2 6.6 L6.4 10.6 L12.6 3.4" fill="none" stroke="#000" stroke-width="2.2"/></svg>
<div id="t229" style="position:absolute;left:24.6px;top:257.69px;font:bold 11px 'Liberation Sans', sans-serif;line-height:11px;color:#ff0000;white-space:pre;transform:translateX(-50%) scaleX(0.9500);transform-origin:center 50%;">75</div>
<div style="position:absolute;left:52px;top:253px;width:266px;height:20px;overflow:hidden;">
<div id="t230" style="position:absolute;left:3.200000000000003px;top:2.64px;font:bold 12px 'Liberation Sans', sans-serif;line-height:12px;color:#ff0000;white-space:pre;transform:scaleX(0.9475);transform-origin:left 50%;">CONSORCIO GASTRONOMICO PUNTO</div>
<div id="t231" style="position:absolute;left:3.200000000000003px;top:18.14px;font:bold 12px 'Liberation Sans', sans-serif;line-height:12px;color:#ff0000;white-space:pre;transform:scaleX(0.9250);transform-origin:left 50%;">MATICAS S.A.C.</div>
</div>
<div id="t232" style="position:absolute;left:395.4px;top:257.84px;font:bold 12px 'Liberation Sans', sans-serif;line-height:12px;color:#ff0000;white-space:pre;transform:translateX(-100%);transform-origin:right 50%;">94.31</div>
<div id="t233" style="position:absolute;left:475.4px;top:257.84px;font:bold 12px 'Liberation Sans', sans-serif;line-height:12px;color:#ff0000;white-space:pre;transform:translateX(-100%);transform-origin:right 50%;">9.43</div>
<div id="t234" style="position:absolute;left:555.4px;top:257.84px;font:bold 12px 'Liberation Sans', sans-serif;line-height:12px;color:#ff0000;white-space:pre;transform:translateX(-100%);transform-origin:right 50%;">0.00</div>
<div id="t235" style="position:absolute;left:635.4px;top:257.84px;font:bold 12px 'Liberation Sans', sans-serif;line-height:12px;color:#ff0000;white-space:pre;transform:translateX(-100%);transform-origin:right 50%;">0.00</div>
<div id="t236" style="position:absolute;left:715.4px;top:257.84px;font:bold 12px 'Liberation Sans', sans-serif;line-height:12px;color:#ff0000;white-space:pre;transform:translateX(-100%);transform-origin:right 50%;">0.00</div>
<div id="t237" style="position:absolute;left:795.4px;top:257.84px;font:bold 12px 'Liberation Sans', sans-serif;line-height:12px;color:#ff0000;white-space:pre;transform:translateX(-100%);transform-origin:right 50%;">0.00</div>
<div id="t238" style="position:absolute;left:875.4px;top:257.84px;font:bold 12px 'Liberation Sans', sans-serif;line-height:12px;color:#ff0000;white-space:pre;transform:translateX(-100%);transform-origin:right 50%;">12.26</div>
<div id="t239" style="position:absolute;left:955.4px;top:257.84px;font:bold 12px 'Liberation Sans', sans-serif;line-height:12px;color:#ff0000;white-space:pre;transform:translateX(-100%);transform-origin:right 50%;">0.00</div>
<div id="t240" style="position:absolute;left:1035.4px;top:257.84px;font:bold 12px 'Liberation Sans', sans-serif;line-height:12px;color:#ff0000;white-space:pre;transform:translateX(-100%);transform-origin:right 50%;">0.00</div>
<div id="t241" style="position:absolute;left:1115.4px;top:257.84px;font:bold 12px 'Liberation Sans', sans-serif;line-height:12px;color:#ff0000;white-space:pre;transform:translateX(-100%);transform-origin:right 50%;">0.00</div>
<div id="t242" style="position:absolute;left:1195.4px;top:257.84px;font:bold 12px 'Liberation Sans', sans-serif;line-height:12px;color:#ff0000;white-space:pre;transform:translateX(-100%);transform-origin:right 50%;">116.00</div>
<div id="t243" style="position:absolute;left:1225px;top:257.84px;font:bold 12px 'Liberation Sans', sans-serif;line-height:12px;color:#ff0000;white-space:pre;transform:translateX(-50%);transform-origin:center 50%;">PEN</div>
<div style="position:absolute;left:0px;top:273px;width:1329px;height:1px;background:#000;"></div>
<div style="position:absolute;left:0px;top:274px;width:51px;height:20px;background:#c0fefe;border-top:1px solid #fff;"></div>
<div style="position:absolute;left:36px;top:276px;width:15px;height:15px;background:#fff;border-top:2px solid #3c3c3c;border-left:2px solid #3c3c3c;border-right:1px solid #d4d0c8;border-bottom:1px solid #d4d0c8;"></div>
<svg style="position:absolute;left:36px;top:276px" width="15" height="15"><path d="M3.2 6.6 L6.4 10.6 L12.6 3.4" fill="none" stroke="#000" stroke-width="2.2"/></svg>
<div id="t244" style="position:absolute;left:24.6px;top:278.69px;font:bold 11px 'Liberation Sans', sans-serif;line-height:11px;color:#ff0000;white-space:pre;transform:translateX(-50%) scaleX(0.9500);transform-origin:center 50%;">76</div>
<div style="position:absolute;left:52px;top:274px;width:266px;height:20px;overflow:hidden;">
<div id="t245" style="position:absolute;left:3.200000000000003px;top:4.84px;font:bold 12px 'Liberation Sans', sans-serif;line-height:12px;color:#ff0000;white-space:pre;transform:scaleX(0.9315);transform-origin:left 50%;">IGNACIOS S.A.C.</div>
</div>
<div id="t246" style="position:absolute;left:395.4px;top:278.84px;font:bold 12px 'Liberation Sans', sans-serif;line-height:12px;color:#ff0000;white-space:pre;transform:translateX(-100%);transform-origin:right 50%;">147.27</div>
<div id="t247" style="position:absolute;left:475.4px;top:278.84px;font:bold 12px 'Liberation Sans', sans-serif;line-height:12px;color:#ff0000;white-space:pre;transform:translateX(-100%);transform-origin:right 50%;">14.73</div>
<div id="t248" style="position:absolute;left:555.4px;top:278.84px;font:bold 12px 'Liberation Sans', sans-serif;line-height:12px;color:#ff0000;white-space:pre;transform:translateX(-100%);transform-origin:right 50%;">0.00</div>
<div id="t249" style="position:absolute;left:635.4px;top:278.84px;font:bold 12px 'Liberation Sans', sans-serif;line-height:12px;color:#ff0000;white-space:pre;transform:translateX(-100%);transform-origin:right 50%;">0.00</div>
<div id="t250" style="position:absolute;left:715.4px;top:278.84px;font:bold 12px 'Liberation Sans', sans-serif;line-height:12px;color:#ff0000;white-space:pre;transform:translateX(-100%);transform-origin:right 50%;">0.00</div>
<div id="t251" style="position:absolute;left:795.4px;top:278.84px;font:bold 12px 'Liberation Sans', sans-serif;line-height:12px;color:#ff0000;white-space:pre;transform:translateX(-100%);transform-origin:right 50%;">0.00</div>
<div id="t252" style="position:absolute;left:875.4px;top:278.84px;font:bold 12px 'Liberation Sans', sans-serif;line-height:12px;color:#ff0000;white-space:pre;transform:translateX(-100%);transform-origin:right 50%;">0.00</div>
<div id="t253" style="position:absolute;left:955.4px;top:278.84px;font:bold 12px 'Liberation Sans', sans-serif;line-height:12px;color:#ff0000;white-space:pre;transform:translateX(-100%);transform-origin:right 50%;">0.00</div>
<div id="t254" style="position:absolute;left:1035.4px;top:278.84px;font:bold 12px 'Liberation Sans', sans-serif;line-height:12px;color:#ff0000;white-space:pre;transform:translateX(-100%);transform-origin:right 50%;">0.00</div>
<div id="t255" style="position:absolute;left:1115.4px;top:278.84px;font:bold 12px 'Liberation Sans', sans-serif;line-height:12px;color:#ff0000;white-space:pre;transform:translateX(-100%);transform-origin:right 50%;">0.00</div>
<div id="t256" style="position:absolute;left:1195.4px;top:278.84px;font:bold 12px 'Liberation Sans', sans-serif;line-height:12px;color:#ff0000;white-space:pre;transform:translateX(-100%);transform-origin:right 50%;">162.00</div>
<div id="t257" style="position:absolute;left:1225px;top:278.84px;font:bold 12px 'Liberation Sans', sans-serif;line-height:12px;color:#ff0000;white-space:pre;transform:translateX(-50%);transform-origin:center 50%;">PEN</div>
<div style="position:absolute;left:0px;top:294px;width:1329px;height:1px;background:#000;"></div>
<div style="position:absolute;left:0px;top:295px;width:51px;height:20px;background:#c0fefe;border-top:1px solid #fff;"></div>
<div style="position:absolute;left:36px;top:297px;width:15px;height:15px;background:#fff;border-top:2px solid #3c3c3c;border-left:2px solid #3c3c3c;border-right:1px solid #d4d0c8;border-bottom:1px solid #d4d0c8;"></div>
<svg style="position:absolute;left:36px;top:297px" width="15" height="15"><path d="M3.2 6.6 L6.4 10.6 L12.6 3.4" fill="none" stroke="#000" stroke-width="2.2"/></svg>
<div id="t258" style="position:absolute;left:24.6px;top:299.69px;font:bold 11px 'Liberation Sans', sans-serif;line-height:11px;color:#ff0000;white-space:pre;transform:translateX(-50%) scaleX(0.9500);transform-origin:center 50%;">77</div>
<div style="position:absolute;left:52px;top:295px;width:266px;height:20px;overflow:hidden;">
<div id="t259" style="position:absolute;left:3.200000000000003px;top:4.84px;font:bold 12px 'Liberation Sans', sans-serif;line-height:12px;color:#ff0000;white-space:pre;transform:scaleX(0.9289);transform-origin:left 50%;">ELITE SALUD S.A.C.</div>
</div>
<div id="t260" style="position:absolute;left:395.4px;top:299.84px;font:bold 12px 'Liberation Sans', sans-serif;line-height:12px;color:#ff0000;white-space:pre;transform:translateX(-100%);transform-origin:right 50%;">3483.05</div>
<div id="t261" style="position:absolute;left:475.4px;top:299.84px;font:bold 12px 'Liberation Sans', sans-serif;line-height:12px;color:#ff0000;white-space:pre;transform:translateX(-100%);transform-origin:right 50%;">626.95</div>
<div id="t262" style="position:absolute;left:555.4px;top:299.84px;font:bold 12px 'Liberation Sans', sans-serif;line-height:12px;color:#ff0000;white-space:pre;transform:translateX(-100%);transform-origin:right 50%;">0.00</div>
<div id="t263" style="position:absolute;left:635.4px;top:299.84px;font:bold 12px 'Liberation Sans', sans-serif;line-height:12px;color:#ff0000;white-space:pre;transform:translateX(-100%);transform-origin:right 50%;">0.00</div>
<div id="t264" style="position:absolute;left:715.4px;top:299.84px;font:bold 12px 'Liberation Sans', sans-serif;line-height:12px;color:#ff0000;white-space:pre;transform:translateX(-100%);transform-origin:right 50%;">0.00</div>
<div id="t265" style="position:absolute;left:795.4px;top:299.84px;font:bold 12px 'Liberation Sans', sans-serif;line-height:12px;color:#ff0000;white-space:pre;transform:translateX(-100%);transform-origin:right 50%;">0.00</div>
<div id="t266" style="position:absolute;left:875.4px;top:299.84px;font:bold 12px 'Liberation Sans', sans-serif;line-height:12px;color:#ff0000;white-space:pre;transform:translateX(-100%);transform-origin:right 50%;">0.00</div>
<div id="t267" style="position:absolute;left:955.4px;top:299.84px;font:bold 12px 'Liberation Sans', sans-serif;line-height:12px;color:#ff0000;white-space:pre;transform:translateX(-100%);transform-origin:right 50%;">0.00</div>
<div id="t268" style="position:absolute;left:1035.4px;top:299.84px;font:bold 12px 'Liberation Sans', sans-serif;line-height:12px;color:#ff0000;white-space:pre;transform:translateX(-100%);transform-origin:right 50%;">0.00</div>
<div id="t269" style="position:absolute;left:1115.4px;top:299.84px;font:bold 12px 'Liberation Sans', sans-serif;line-height:12px;color:#ff0000;white-space:pre;transform:translateX(-100%);transform-origin:right 50%;">0.00</div>
<div id="t270" style="position:absolute;left:1195.4px;top:299.84px;font:bold 12px 'Liberation Sans', sans-serif;line-height:12px;color:#ff0000;white-space:pre;transform:translateX(-100%);transform-origin:right 50%;">4110.00</div>
<div id="t271" style="position:absolute;left:1225px;top:299.84px;font:bold 12px 'Liberation Sans', sans-serif;line-height:12px;color:#ff0000;white-space:pre;transform:translateX(-50%);transform-origin:center 50%;">PEN</div>
<div style="position:absolute;left:0px;top:315px;width:1329px;height:1px;background:#000;"></div>
<div style="position:absolute;left:0px;top:316px;width:51px;height:20px;background:#c0fefe;border-top:1px solid #fff;"></div>
<div style="position:absolute;left:36px;top:318px;width:15px;height:15px;background:#fff;border-top:2px solid #3c3c3c;border-left:2px solid #3c3c3c;border-right:1px solid #d4d0c8;border-bottom:1px solid #d4d0c8;"></div>
<svg style="position:absolute;left:36px;top:318px" width="15" height="15"><path d="M3.2 6.6 L6.4 10.6 L12.6 3.4" fill="none" stroke="#000" stroke-width="2.2"/></svg>
<div id="t272" style="position:absolute;left:24.6px;top:320.69px;font:bold 11px 'Liberation Sans', sans-serif;line-height:11px;color:#ff0000;white-space:pre;transform:translateX(-50%) scaleX(0.9500);transform-origin:center 50%;">78</div>
<div style="position:absolute;left:52px;top:316px;width:266px;height:20px;overflow:hidden;">
<div id="t273" style="position:absolute;left:3.200000000000003px;top:4.84px;font:bold 12px 'Liberation Sans', sans-serif;line-height:12px;color:#ff0000;white-space:pre;transform:scaleX(0.9289);transform-origin:left 50%;">ELITE SALUD S.A.C.</div>
</div>
<div id="t274" style="position:absolute;left:395.4px;top:320.84px;font:bold 12px 'Liberation Sans', sans-serif;line-height:12px;color:#ff0000;white-space:pre;transform:translateX(-100%);transform-origin:right 50%;">3339.83</div>
<div id="t275" style="position:absolute;left:475.4px;top:320.84px;font:bold 12px 'Liberation Sans', sans-serif;line-height:12px;color:#ff0000;white-space:pre;transform:translateX(-100%);transform-origin:right 50%;">601.17</div>
<div id="t276" style="position:absolute;left:555.4px;top:320.84px;font:bold 12px 'Liberation Sans', sans-serif;line-height:12px;color:#ff0000;white-space:pre;transform:translateX(-100%);transform-origin:right 50%;">0.00</div>
<div id="t277" style="position:absolute;left:635.4px;top:320.84px;font:bold 12px 'Liberation Sans', sans-serif;line-height:12px;color:#ff0000;white-space:pre;transform:translateX(-100%);transform-origin:right 50%;">0.00</div>
<div id="t278" style="position:absolute;left:715.4px;top:320.84px;font:bold 12px 'Liberation Sans', sans-serif;line-height:12px;color:#ff0000;white-space:pre;transform:translateX(-100%);transform-origin:right 50%;">0.00</div>
<div id="t279" style="position:absolute;left:795.4px;top:320.84px;font:bold 12px 'Liberation Sans', sans-serif;line-height:12px;color:#ff0000;white-space:pre;transform:translateX(-100%);transform-origin:right 50%;">0.00</div>
<div id="t280" style="position:absolute;left:875.4px;top:320.84px;font:bold 12px 'Liberation Sans', sans-serif;line-height:12px;color:#ff0000;white-space:pre;transform:translateX(-100%);transform-origin:right 50%;">0.00</div>
<div id="t281" style="position:absolute;left:955.4px;top:320.84px;font:bold 12px 'Liberation Sans', sans-serif;line-height:12px;color:#ff0000;white-space:pre;transform:translateX(-100%);transform-origin:right 50%;">0.00</div>
<div id="t282" style="position:absolute;left:1035.4px;top:320.84px;font:bold 12px 'Liberation Sans', sans-serif;line-height:12px;color:#ff0000;white-space:pre;transform:translateX(-100%);transform-origin:right 50%;">0.00</div>
<div id="t283" style="position:absolute;left:1115.4px;top:320.84px;font:bold 12px 'Liberation Sans', sans-serif;line-height:12px;color:#ff0000;white-space:pre;transform:translateX(-100%);transform-origin:right 50%;">0.00</div>
<div id="t284" style="position:absolute;left:1195.4px;top:320.84px;font:bold 12px 'Liberation Sans', sans-serif;line-height:12px;color:#ff0000;white-space:pre;transform:translateX(-100%);transform-origin:right 50%;">3941.00</div>
<div id="t285" style="position:absolute;left:1225px;top:320.84px;font:bold 12px 'Liberation Sans', sans-serif;line-height:12px;color:#ff0000;white-space:pre;transform:translateX(-50%);transform-origin:center 50%;">PEN</div>
<div style="position:absolute;left:0px;top:336px;width:1329px;height:1px;background:#000;"></div>
<div style="position:absolute;left:0px;top:337px;width:51px;height:20px;background:#c0fefe;border-top:1px solid #fff;"></div>
<div style="position:absolute;left:36px;top:339px;width:15px;height:15px;background:#fff;border-top:2px solid #3c3c3c;border-left:2px solid #3c3c3c;border-right:1px solid #d4d0c8;border-bottom:1px solid #d4d0c8;"></div>
<svg style="position:absolute;left:36px;top:339px" width="15" height="15"><path d="M3.2 6.6 L6.4 10.6 L12.6 3.4" fill="none" stroke="#000" stroke-width="2.2"/></svg>
<div id="t286" style="position:absolute;left:24.6px;top:341.69px;font:bold 11px 'Liberation Sans', sans-serif;line-height:11px;color:#ff0000;white-space:pre;transform:translateX(-50%) scaleX(0.9500);transform-origin:center 50%;">79</div>
<div style="position:absolute;left:52px;top:337px;width:266px;height:20px;overflow:hidden;">
<div id="t287" style="position:absolute;left:3.200000000000003px;top:4.84px;font:bold 12px 'Liberation Sans', sans-serif;line-height:12px;color:#ff0000;white-space:pre;transform:scaleX(0.9289);transform-origin:left 50%;">ELITE SALUD S.A.C.</div>
</div>
<div id="t288" style="position:absolute;left:395.4px;top:341.84px;font:bold 12px 'Liberation Sans', sans-serif;line-height:12px;color:#ff0000;white-space:pre;transform:translateX(-100%);transform-origin:right 50%;">4085.59</div>
<div id="t289" style="position:absolute;left:475.4px;top:341.84px;font:bold 12px 'Liberation Sans', sans-serif;line-height:12px;color:#ff0000;white-space:pre;transform:translateX(-100%);transform-origin:right 50%;">973.41</div>
<div id="t290" style="position:absolute;left:555.4px;top:341.84px;font:bold 12px 'Liberation Sans', sans-serif;line-height:12px;color:#ff0000;white-space:pre;transform:translateX(-100%);transform-origin:right 50%;">0.00</div>
<div id="t291" style="position:absolute;left:635.4px;top:341.84px;font:bold 12px 'Liberation Sans', sans-serif;line-height:12px;color:#ff0000;white-space:pre;transform:translateX(-100%);transform-origin:right 50%;">0.00</div>
<div id="t292" style="position:absolute;left:715.4px;top:341.84px;font:bold 12px 'Liberation Sans', sans-serif;line-height:12px;color:#ff0000;white-space:pre;transform:translateX(-100%);transform-origin:right 50%;">0.00</div>
<div id="t293" style="position:absolute;left:795.4px;top:341.84px;font:bold 12px 'Liberation Sans', sans-serif;line-height:12px;color:#ff0000;white-space:pre;transform:translateX(-100%);transform-origin:right 50%;">0.00</div>
<div id="t294" style="position:absolute;left:875.4px;top:341.84px;font:bold 12px 'Liberation Sans', sans-serif;line-height:12px;color:#ff0000;white-space:pre;transform:translateX(-100%);transform-origin:right 50%;">0.00</div>
<div id="t295" style="position:absolute;left:955.4px;top:341.84px;font:bold 12px 'Liberation Sans', sans-serif;line-height:12px;color:#ff0000;white-space:pre;transform:translateX(-100%);transform-origin:right 50%;">0.00</div>
<div id="t296" style="position:absolute;left:1035.4px;top:341.84px;font:bold 12px 'Liberation Sans', sans-serif;line-height:12px;color:#ff0000;white-space:pre;transform:translateX(-100%);transform-origin:right 50%;">0.00</div>
<div id="t297" style="position:absolute;left:1115.4px;top:341.84px;font:bold 12px 'Liberation Sans', sans-serif;line-height:12px;color:#ff0000;white-space:pre;transform:translateX(-100%);transform-origin:right 50%;">0.00</div>
<div id="t298" style="position:absolute;left:1195.4px;top:341.84px;font:bold 12px 'Liberation Sans', sans-serif;line-height:12px;color:#ff0000;white-space:pre;transform:translateX(-100%);transform-origin:right 50%;">5059.00</div>
<div id="t299" style="position:absolute;left:1225px;top:341.84px;font:bold 12px 'Liberation Sans', sans-serif;line-height:12px;color:#ff0000;white-space:pre;transform:translateX(-50%);transform-origin:center 50%;">PEN</div>
<div style="position:absolute;left:0px;top:357px;width:1329px;height:1px;background:#000;"></div>
</div>
<div style="position:absolute;left:12px;top:224px;width:1329px;height:1px;background:#000;"></div>
<div style="position:absolute;left:63px;top:172px;width:1px;height:396px;background:#000;"></div>
<div style="position:absolute;left:330px;top:172px;width:1px;height:396px;background:#000;"></div>
<div style="position:absolute;left:410px;top:172px;width:1px;height:396px;background:#000;"></div>
<div style="position:absolute;left:490px;top:172px;width:1px;height:396px;background:#000;"></div>
<div style="position:absolute;left:570px;top:172px;width:1px;height:396px;background:#000;"></div>
<div style="position:absolute;left:650px;top:172px;width:1px;height:396px;background:#000;"></div>
<div style="position:absolute;left:730px;top:172px;width:1px;height:396px;background:#000;"></div>
<div style="position:absolute;left:810px;top:172px;width:1px;height:396px;background:#000;"></div>
<div style="position:absolute;left:890px;top:172px;width:1px;height:396px;background:#000;"></div>
<div style="position:absolute;left:970px;top:172px;width:1px;height:396px;background:#000;"></div>
<div style="position:absolute;left:1050px;top:172px;width:1px;height:396px;background:#000;"></div>
<div style="position:absolute;left:1130px;top:172px;width:1px;height:396px;background:#000;"></div>
<div style="position:absolute;left:1210px;top:172px;width:1px;height:396px;background:#000;"></div>
<div style="position:absolute;left:1263px;top:172px;width:1px;height:396px;background:#000;"></div>
<div style="position:absolute;left:64px;top:172px;width:1px;height:53px;background:#fff;"></div>
<div style="position:absolute;left:331px;top:172px;width:1px;height:53px;background:#fff;"></div>
<div style="position:absolute;left:411px;top:172px;width:1px;height:53px;background:#fff;"></div>
<div style="position:absolute;left:491px;top:172px;width:1px;height:53px;background:#fff;"></div>
<div style="position:absolute;left:571px;top:172px;width:1px;height:53px;background:#fff;"></div>
<div style="position:absolute;left:651px;top:172px;width:1px;height:53px;background:#fff;"></div>
<div style="position:absolute;left:731px;top:172px;width:1px;height:53px;background:#fff;"></div>
<div style="position:absolute;left:811px;top:172px;width:1px;height:53px;background:#fff;"></div>
<div style="position:absolute;left:891px;top:172px;width:1px;height:53px;background:#fff;"></div>
<div style="position:absolute;left:971px;top:172px;width:1px;height:53px;background:#fff;"></div>
<div style="position:absolute;left:1051px;top:172px;width:1px;height:53px;background:#fff;"></div>
<div style="position:absolute;left:1131px;top:172px;width:1px;height:53px;background:#fff;"></div>
<div style="position:absolute;left:1211px;top:172px;width:1px;height:53px;background:#fff;"></div>
<div style="position:absolute;left:1264px;top:172px;width:1px;height:53px;background:#fff;"></div>
<div style="position:absolute;left:1341px;top:172px;width:17px;height:413px;background:#f0f0f0;"></div>
<div style="position:absolute;left:11px;top:568px;width:1347px;height:17px;background:#f0f0f0;"></div>
<div style="position:absolute;left:1342px;top:191px;width:15px;height:17px;background:#cdcdcd;"></div>
<svg style="position:absolute;left:1344px;top:176px" width="11" height="10"><path d="M1.5 7.5 L5.5 3.5 L9.5 7.5" fill="none" stroke="#505050" stroke-width="2"/></svg>
<svg style="position:absolute;left:1344px;top:555px" width="11" height="10"><path d="M1.5 2.5 L5.5 6.5 L9.5 2.5" fill="none" stroke="#505050" stroke-width="2"/></svg>
<svg style="position:absolute;left:15px;top:572px" width="10" height="10"><path d="M6.5 1.5 L3 5 L6.5 8.5" fill="none" stroke="#505050" stroke-width="2"/></svg>
<svg style="position:absolute;left:1329px;top:572px" width="10" height="10"><path d="M3 1.5 L6.5 5 L3 8.5" fill="none" stroke="#505050" stroke-width="2"/></svg>
<div style="position:absolute;left:751px;top:569px;width:17px;height:15px;background:#cdcdcd;"></div>
<div style="position:absolute;left:16px;top:600px;width:21px;height:3px;background:#5068b4;"></div>
<div style="position:absolute;left:16px;top:607px;width:21px;height:3px;background:#5068b4;"></div>
<div style="position:absolute;left:16px;top:614px;width:21px;height:3px;background:#5068b4;"></div>
<svg style="position:absolute;left:9px;top:598px" width="7" height="22"><text x="0.5" y="6" font-family="Liberation Sans" font-weight="bold" font-size="6" fill="#222">1</text><text x="0" y="13.2" font-family="Liberation Sans" font-weight="bold" font-size="6" fill="#222">2</text><text x="0" y="20.2" font-family="Liberation Sans" font-weight="bold" font-size="6" fill="#222">3</text></svg>
<div id="t300" style="position:absolute;left:48.3px;top:602.06px;font:normal 16px 'Liberation Sans', sans-serif;line-height:16px;color:#505050;white-space:pre;transform:scaleX(0.9876);transform-origin:left 50%;">Total Registro(s) Seleccionado(s) 298</div>
<div id="t301" style="position:absolute;left:48.3px;top:621.69px;font:normal 11px 'Liberation Sans', sans-serif;line-height:11px;color:#000;white-space:pre;transform:scaleX(0.9891);transform-origin:left 50%;text-decoration:underline;">Pasos a seguir:</div>
<div id="t302" style="position:absolute;left:48.3px;top:637.79px;font:normal 11px 'Liberation Sans', sans-serif;line-height:11px;color:#000;white-space:pre;transform:scaleX(0.9757);transform-origin:left 50%;">(a) Seleccionar el tipo de registro a generar (RVIE ó RCE)</div>
<div id="t303" style="position:absolute;left:48.3px;top:651.39px;font:normal 11px 'Liberation Sans', sans-serif;line-height:11px;color:#000;white-space:pre;transform:scaleX(0.9951);transform-origin:left 50%;">(b) Seleccionar el periodo a procesar</div>
<div id="t304" style="position:absolute;left:48.3px;top:664.59px;font:normal 11px 'Liberation Sans', sans-serif;line-height:11px;color:#000;white-space:pre;transform:scaleX(1.0033);transform-origin:left 50%;">(c) Filtrar los datos del registro a procesar (a)</div>
<div id="t305" style="position:absolute;left:48.3px;top:677.79px;font:normal 11px 'Liberation Sans', sans-serif;line-height:11px;color:#000;white-space:pre;transform:scaleX(1.0049);transform-origin:left 50%;">(d) Generar archivo plano (.txt y .zip)</div>
<div id="t306" style="position:absolute;left:48.3px;top:691.39px;font:normal 11px 'Liberation Sans', sans-serif;line-height:11px;color:#000;white-space:pre;transform:scaleX(1.0036);transform-origin:left 50%;">(e) Mostrar el archivo generado (.txt y .zip)</div>
<div id="t307" style="position:absolute;right:883.9px;top:601.84px;font:normal 12px 'Liberation Sans', sans-serif;line-height:12px;color:#000;white-space:pre;transform:scaleX(1.0350);transform-origin:right 50%;">Total Base Imponible</div>
<div id="t308" style="position:absolute;right:779.9px;top:601.84px;font:normal 12px 'Liberation Sans', sans-serif;line-height:12px;color:#000;white-space:pre;transform:scaleX(1.0000);transform-origin:right 50%;">328,719.64</div>
<div id="t309" style="position:absolute;right:883.9px;top:616.84px;font:normal 12px 'Liberation Sans', sans-serif;line-height:12px;color:#000;white-space:pre;transform:scaleX(1.0350);transform-origin:right 50%;">Tota IGV</div>
<div id="t310" style="position:absolute;right:779.9px;top:616.84px;font:normal 12px 'Liberation Sans', sans-serif;line-height:12px;color:#000;white-space:pre;transform:scaleX(1.0000);transform-origin:right 50%;">59,088.90</div>
<div id="t311" style="position:absolute;right:883.9px;top:646.64px;font:normal 12px 'Liberation Sans', sans-serif;line-height:12px;color:#000;white-space:pre;transform:scaleX(1.0350);transform-origin:right 50%;">No Gravadas</div>
<div id="t312" style="position:absolute;right:779.9px;top:646.64px;font:normal 12px 'Liberation Sans', sans-serif;line-height:12px;color:#000;white-space:pre;transform:scaleX(1.0000);transform-origin:right 50%;">329.47</div>
<div id="t313" style="position:absolute;right:883.9px;top:661.64px;font:normal 12px 'Liberation Sans', sans-serif;line-height:12px;color:#000;white-space:pre;transform:scaleX(1.0350);transform-origin:right 50%;">Total Otros Tributos</div>
<div id="t314" style="position:absolute;right:779.9px;top:661.64px;font:normal 12px 'Liberation Sans', sans-serif;line-height:12px;color:#000;white-space:pre;transform:scaleX(1.0000);transform-origin:right 50%;">13.70</div>
<div style="position:absolute;left:486px;top:675px;width:101px;height:15px;background:#ffc0c0;"></div>
<div id="t315" style="position:absolute;right:883.9px;top:676.24px;font:normal 12px 'Liberation Sans', sans-serif;line-height:12px;color:#000;white-space:pre;transform:scaleX(1.0350);transform-origin:right 50%;">Total Importe</div>
<div id="t316" style="position:absolute;right:779.9px;top:676.24px;font:normal 12px 'Liberation Sans', sans-serif;line-height:12px;color:#000;white-space:pre;transform:scaleX(1.0000);transform-origin:right 50%;">388,151.71</div>
<div id="t317" style="position:absolute;left:652.4px;top:602.39px;font:normal 11px 'Liberation Sans', sans-serif;line-height:11px;color:#000;white-space:pre;transform:scaleX(0.9650);transform-origin:left 50%;">Se debe copiar el archivo .TXT exportado desde el SIRE de la PROPUESTA recomendada en la carpeta</div>
<div id="t318" style="position:absolute;left:652.4px;top:615.79px;font:normal 11px 'Liberation Sans', sans-serif;line-height:11px;color:#000;white-space:pre;transform:scaleX(0.9519);transform-origin:left 50%;">C:\BIN\Sistemas\Girasoles\TCG\SysCtb\SIRE\20512867741\TXT</div>
<div style="position:absolute;left:622px;top:632px;width:24px;height:23px;background:#f0f0f0;border-top:1px solid #fff;border-left:1px solid #fff;border-right:1px solid #696969;border-bottom:1px solid #696969;box-shadow:inset -1px -1px 0 #a0a0a0, inset 1px 1px 0 #e3e3e3;"></div>
<svg style="position:absolute;left:624px;top:633px" width="20" height="19"><rect x="2.5" y="11.5" width="15" height="5.5" rx="1.5" fill="#f0f0f0" stroke="#9a9a9a" stroke-width="1"/><path d="M4 14.5 h11" stroke="#aaa" stroke-width="1"/><rect x="14.5" y="12.8" width="1.6" height="1.6" fill="#3ac83a"/><path d="M7.5 10 h5 v-4 h3 l-5.5 -5 l-5.5 5 h3 z" fill="#3a9ae8" stroke="#1a5aa8" stroke-width=".6"/></svg>
<div style="position:absolute;left:652px;top:631px;width:207px;height:24px;background:#fff;border:1px solid #646464;"></div>
<div style="position:absolute;left:653px;top:632px;width:205px;height:22px;overflow:hidden;">
<div style="position:absolute;left:1.6px;top:2.3px;font:10.6px 'Liberation Sans',sans-serif;line-height:11px;white-space:pre;color:#000;transform:scaleX(0.985);transform-origin:left 50%;">C:\BIN\Sistemas\Girasoles\TCG\SysCtb\SIRE\2051286</div>
</div>
<div style="position:absolute;left:653px;top:660px;width:204px;height:7px;background:repeating-linear-gradient(90deg,#0a74da 0 4px,transparent 4px 6px);"></div>
<div style="position:absolute;left:866px;top:632px;width:24px;height:23px;background:#f0f0f0;border-top:1px solid #fff;border-left:1px solid #fff;border-right:1px solid #696969;border-bottom:1px solid #696969;box-shadow:inset -1px -1px 0 #a0a0a0, inset 1px 1px 0 #e3e3e3;"></div>
<svg style="position:absolute;left:869px;top:633px" width="18" height="18"><g transform="translate(9,9)"><path d="M-1.6 -7.5 h3.2 v2 l2.2 1 l1.5 -1.5 l2.2 2.2 l-1.5 1.5 l1 2.2 h2 v3.2 h-2 l-1 2.2 l1.5 1.5 l-2.2 2.2 l-1.5 -1.5 l-2.2 1 v2 h-3.2 v-2 l-2.2 -1 l-1.5 1.5 l-2.2 -2.2 l1.5 -1.5 l-1 -2.2 h-2 v-3.2 h2 l1 -2.2 l-1.5 -1.5 l2.2 -2.2 l1.5 1.5 l2.2 -1 z" fill="#fff" stroke="#000" stroke-width="1.2" stroke-linejoin="round" transform="scale(0.95)"/><rect x="-2.6" y="-2.6" width="5.2" height="5.2" fill="#fff" stroke="#000" stroke-width="1.2"/></g></svg>
<div style="position:absolute;left:897px;top:632px;width:23px;height:23px;background:#f0f0f0;border-top:1px solid #fff;border-left:1px solid #fff;border-right:1px solid #696969;border-bottom:1px solid #696969;box-shadow:inset -1px -1px 0 #a0a0a0, inset 1px 1px 0 #e3e3e3;"></div>
<svg style="position:absolute;left:899px;top:634px" width="19" height="17"><rect x="1.5" y="1.5" width="14" height="12" fill="#fff" stroke="#000" stroke-width="1.3"/><path d="M1.5 5 h14 M1.5 8 h14 M1.5 11 h14 M8 1.5 v12" stroke="#b8b8b8" stroke-width="1"/><path d="M9 6 L15 13 M15 6 L9 13" stroke="#000" stroke-width="2.6"/><path d="M9 6 L15 13 M15 6 L9 13" stroke="#20e0f0" stroke-width="1.4"/><circle cx="16" cy="11" r="1.3" fill="#fff" stroke="#000" stroke-width=".8"/></svg>
<div style="position:absolute;left:924px;top:644px;width:11px;height:11px;background:#fff;border:1px solid #333;"></div>
<div style="position:absolute;left:944px;top:632px;width:24px;height:23px;background:#f0f0f0;border-top:1px solid #fff;border-left:1px solid #fff;border-right:1px solid #696969;border-bottom:1px solid #696969;box-shadow:inset -1px -1px 0 #a0a0a0, inset 1px 1px 0 #e3e3e3;"></div>
<svg style="position:absolute;left:946px;top:633px" width="20" height="19"><rect x="2.5" y="11.5" width="15" height="5.5" rx="1.5" fill="#f0f0f0" stroke="#9a9a9a" stroke-width="1"/><path d="M4 14.5 h11" stroke="#aaa" stroke-width="1"/><rect x="14.5" y="12.8" width="1.6" height="1.6" fill="#3ac83a"/><path d="M7.5 1 h5 v4 h3 l-5.5 5 l-5.5 -5 h3 z" fill="#3cbc3c" stroke="#1a8a1a" stroke-width=".6"/></svg>
<div style="position:absolute;left:990px;top:631px;width:47px;height:19px;border:1px solid #707070;background:#c0fefe;"></div>
<div style="position:absolute;left:990px;top:652px;width:47px;height:19px;border:1px solid #707070;background:#ff0000;"></div>
<div style="position:absolute;left:990px;top:672px;width:47px;height:19px;border:1px solid #707070;background:#c0fefe;"></div>
<div id="t319" style="position:absolute;left:1013.5px;top:633.84px;font:bold 12px 'Liberation Sans', sans-serif;line-height:12px;color:#ff0000;white-space:pre;transform:translateX(-50%);transform-origin:center 50%;">N°</div>
<div id="t320" style="position:absolute;left:1013.5px;top:654.34px;font:normal 12px 'Liberation Sans', sans-serif;line-height:12px;color:#fff;white-space:pre;transform:translateX(-50%);transform-origin:center 50%;">N°</div>
<div id="t321" style="position:absolute;left:1042px;top:634.59px;font:normal 11px 'Liberation Sans', sans-serif;line-height:11px;color:#000;white-space:pre;transform:scaleX(0.9641);transform-origin:left 50%;">Existe en el sistema pero no en la propuesta SIRE</div>
<div id="t322" style="position:absolute;left:1042px;top:654.69px;font:normal 11px 'Liberation Sans', sans-serif;line-height:11px;color:#000;white-space:pre;transform:scaleX(0.9726);transform-origin:left 50%;">Hay diferencia entre el sistema y la propuesta SIRE</div>
<div id="t323" style="position:absolute;left:1042px;top:675.09px;font:normal 11px 'Liberation Sans', sans-serif;line-height:11px;color:#000;white-space:pre;transform:scaleX(0.9604);transform-origin:left 50%;">Existe em la propuesta SIRE pero no en el sistema</div></body></html>
